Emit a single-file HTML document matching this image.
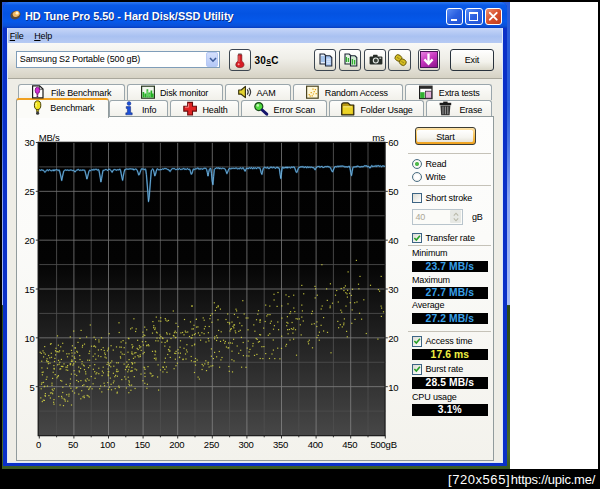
<!DOCTYPE html>
<html><head><meta charset="utf-8"><title>HD Tune Pro 5.50 - Hard Disk/SSD Utility</title>
<style>
html,body{margin:0;padding:0}
body{width:600px;height:489px;background:#000;overflow:hidden;position:relative;font-family:"Liberation Sans",sans-serif;font-size:9px;letter-spacing:-0.15px;color:#000}
.a{position:absolute}
#shot{left:2px;top:2px;width:595.8px;height:466.5px;background:#fff;overflow:hidden}
#wall{left:-0.2px;top:0;width:508.2px;height:466.7px;background:linear-gradient(#2a5cd8 0,#2a5cd8 22%,#4a74e0 30%,#8aa4f0 42%,#a8bcf4 64.8%,#2c4818 65%,#34521c 80%,#4a6a2c 96%,#3a5a24 100%)}
#win{left:1.3px;top:0;width:503.7px;height:464.3px;background:#0a30c8;border-radius:6px 6px 0 0}
#title{left:0;top:0;width:503.7px;height:25.5px;border-radius:6px 6px 0 0;
 background:linear-gradient(#2f7af2 0,#0a5ae8 12%,#0453e2 45%,#0558ea 75%,#0a50d8 92%,#063cc0 100%)}
#ttext{left:21.7px;top:8.1px;color:#fff;font-weight:bold;font-size:10.9px;white-space:nowrap;letter-spacing:0;text-shadow:0.8px 0.8px 0.5px #0a2a80}
#client{left:3.7px;top:25.5px;width:494px;height:434.6px;background:#eeede6;border:1px solid #dce8fa;border-top:none}
#menu{left:0;top:0;width:494px;height:15.2px;background:linear-gradient(#c6d6f8,#a9c1f1 55%,#b6caf3)}
#menu span{position:absolute;top:3.8px}
#tool{left:0;top:15.2px;width:494px;height:35.8px;background:linear-gradient(#f9f9f6,#efeee8 45%,#d6d2c4 100%);border-bottom:1px solid #a9a79c}
.btn{border:1.1px solid #3c4650;border-radius:3px;background:linear-gradient(#fff,#f3f2ec 60%,#d9d6c8);box-sizing:border-box}
.tab{box-sizing:border-box;border:1px solid #9aa6ac;border-bottom:none;border-radius:3px 3px 0 0;background:linear-gradient(#fdfdfb,#f1f0ea);height:15.5px;white-space:nowrap}
.tab span{position:absolute;top:3px}.tab.r2 span{top:3.6px}
#pane{left:9.3px;top:90px;width:478px;height:344.5px;background:#fbfbf8;border:1px solid #919b9c;box-sizing:border-box}
.sep{height:1px;background:#c5c2b8;left:408px;width:83px}
.val{left:412px;width:75.7px;height:11.4px;background:#000;text-align:center;font-weight:bold;font-size:10.3px;line-height:11.8px;letter-spacing:0.12px}
.cb{width:10.4px;height:10.4px;border:1px solid #3c6484;background:linear-gradient(135deg,#dcdcd4,#fff);box-sizing:border-box}
.rb{width:10.4px;height:10.4px;border:1px solid #4a6e84;border-radius:50%;background:radial-gradient(#fff 40%,#dcdcd4);box-sizing:border-box}
svg text{font-family:"Liberation Sans",sans-serif;font-size:9.5px;letter-spacing:-0.25px;fill:#000;stroke:none}
</style></head><body>
<div id="shot" class="a">
 <div id="wall" class="a"></div>
 <div id="win" class="a">
  <div id="title" class="a">
   <svg class="a" style="left:6px;top:7px" width="14" height="13" viewBox="0 0 14 13"><ellipse cx="6.5" cy="6" rx="5.2" ry="4.2" transform="rotate(-25 6.5 6)" fill="#5a4a3a"/><ellipse cx="7.2" cy="5" rx="3.6" ry="2.8" transform="rotate(-25 7 5)" fill="#f2b860"/><circle cx="8" cy="4.2" r="1.4" fill="#fff6d8"/></svg>
   <div id="ttext" class="a">HD Tune Pro 5.50 - Hard Disk/SSD Utility</div>
   <div class="a" style="left:442.9px;top:6.1px;width:17.1px;height:16.5px;border:1px solid #fff;border-radius:3px;box-sizing:border-box;background:linear-gradient(135deg,#5a8df5,#2a5fe0 50%,#2454d4)"><div class="a" style="left:3.5px;top:9.5px;width:6px;height:2.4px;background:#fff"></div></div>
   <div class="a" style="left:462.2px;top:6.1px;width:17.1px;height:16.5px;border:1px solid #fff;border-radius:3px;box-sizing:border-box;background:linear-gradient(135deg,#5a8df5,#2a5fe0 50%,#2454d4)"><div class="a" style="left:3px;top:3px;width:8.5px;height:8.5px;border:1px solid #fff;border-top-width:2.4px;box-sizing:border-box"></div></div>
   <div class="a" style="left:481.4px;top:6.1px;width:17.1px;height:16.5px;border:1px solid #fff;border-radius:3px;box-sizing:border-box;background:linear-gradient(135deg,#ee9070,#d8502c 50%,#c03c1c)"><svg class="a" style="left:0;top:0" width="14.5" height="14.5" viewBox="0 0 14.5 14.5"><path d="M3.8 3.8 L10.7 10.7 M10.7 3.8 L3.8 10.7" stroke="#fff" stroke-width="1.9" stroke-linecap="round"/></svg></div>
  </div>
  <div id="client" class="a">
   <div id="menu" class="a"><span style="left:1.7px"><u>F</u>ile</span><span style="left:26.2px"><u>H</u>elp</span></div>
   <div id="tool" class="a"></div>
  </div>
 </div>
</div>

<!-- everything below positioned in page coordinates -->
<!-- toolbar controls -->
<div class="a" style="left:16px;top:50.6px;width:203.6px;height:17.7px;border:1px solid #7f9db9;background:#fff;box-sizing:border-box"></div>
<div class="a" style="left:19.8px;top:54.3px;white-space:nowrap">Samsung S2 Portable (500 gB)</div>
<div class="a" style="left:205.5px;top:52px;width:12.7px;height:14.8px;border-radius:2px;background:linear-gradient(#d5e0fc,#b4c8f6);border:0.5px solid #b7c9f5;box-sizing:border-box"><svg class="a" style="left:2.3px;top:4.4px" width="8" height="6" viewBox="0 0 8 6"><path d="M1 1 L4 4.2 L7 1" fill="none" stroke="#3c5b9a" stroke-width="1.6"/></svg></div>

<div class="a btn" style="left:228.8px;top:48.8px;width:22.4px;height:22.4px"><svg class="a" style="left:4.6px;top:2.2px" width="12" height="17" viewBox="0 0 12 17"><rect x="4" y="1.2" width="3.8" height="2" rx="0.8" fill="#8c8c8c"/><path d="M4 2.8H7.8V9.2Q10 10.4 10 12.6Q10 15.6 5.9 15.6Q1.8 15.6 1.8 12.6Q1.8 10.4 4 9.2Z" fill="#d81c24" stroke="#7a1418" stroke-width="0.7"/><path d="M5 3.5V10" stroke="#f08080" stroke-width="0.9"/><circle cx="4.6" cy="12.3" r="1" fill="#f4a0a0"/></svg></div>
<div class="a" style="left:254.5px;top:54.8px;font-weight:bold;font-size:10px;letter-spacing:0.25px;white-space:nowrap">30<span style="font-size:8.6px;text-decoration:underline">s</span>C</div>

<div class="a btn" style="left:313.8px;top:48.8px;width:22.4px;height:22.4px"><svg class="a" style="left:4.4px;top:3px" width="14" height="14" viewBox="0 0 14 14"><path d="M1 1H5.2L7 2.8V11H1Z" fill="#e4eefc" stroke="#1c2434" stroke-width="1.1"/><path d="M2 4h4M2 6h4M2 8h4" stroke="#5a90d8" stroke-width="0.9"/><path d="M6.5 2.8H11L12.8 4.6V13H6.5Z" fill="#a8c6f0" stroke="#1c2434" stroke-width="1.1"/><path d="M7.6 6.2h4M7.6 8.2h4M7.6 10.2h4" stroke="#eef4ff" stroke-width="0.9"/></svg></div>
<div class="a btn" style="left:338.7px;top:48.8px;width:22.4px;height:22.4px"><svg class="a" style="left:4.4px;top:3px" width="14" height="14" viewBox="0 0 14 14"><path d="M1 1H5.2L7 2.8V11H1Z" fill="#e4f4e4" stroke="#1c2434" stroke-width="1.1"/><path d="M2.4 4v5M4.4 5v4" stroke="#30b030" stroke-width="1.3"/><path d="M6.5 2.8H11L12.8 4.6V13H6.5Z" fill="#cfe8d0" stroke="#1c2434" stroke-width="1.1"/><path d="M8.4 6v5.6M10.6 7v4.6" stroke="#30b030" stroke-width="1.3"/></svg></div>
<div class="a btn" style="left:363.6px;top:48.8px;width:22.4px;height:22.4px"><svg class="a" style="left:4.2px;top:4.6px" width="14" height="12" viewBox="0 0 14 12"><rect x="0.6" y="2.6" width="12.8" height="8" rx="1" fill="#262c26"/><rect x="4" y="0.8" width="4.6" height="3" rx="0.6" fill="#262c26"/><circle cx="6.8" cy="6.5" r="2.5" fill="#3a423a" stroke="#e8ece8" stroke-width="1.1"/><rect x="10.4" y="3.6" width="1.8" height="1.2" fill="#d8d8d8"/></svg></div>
<div class="a btn" style="left:388.3px;top:48.8px;width:22.4px;height:22.4px"><svg class="a" style="left:3.4px;top:3px" width="15" height="14" viewBox="0 0 15 14"><ellipse cx="5.4" cy="5" rx="3.5" ry="3.1" transform="rotate(35 5.4 5)" fill="#d4bc20" stroke="#6a5c10" stroke-width="0.9"/><ellipse cx="9.8" cy="9.2" rx="3.5" ry="3.1" transform="rotate(35 9.8 9.2)" fill="#d4bc20" stroke="#6a5c10" stroke-width="0.9"/><path d="M4 4.4L6.6 5.8M8.4 8.4L11 10" stroke="#8a7a18" stroke-width="0.8"/></svg></div>
<div class="a btn" style="left:417.6px;top:48.8px;width:22.4px;height:22.4px"></div>
<div class="a" style="left:420px;top:51px;width:17.8px;height:17.2px;border:1px solid #4a1458;box-sizing:border-box;background:linear-gradient(150deg,#e880e0 0,#c838c0 45%,#8c148c 100%)"><svg class="a" style="left:2.4px;top:1.2px" width="11" height="13" viewBox="0 0 11 13"><path d="M5.5 0.6V9.4M1.4 6.4L5.5 10.8L9.6 6.4" fill="none" stroke="#fff" stroke-width="2.3"/></svg></div>
<div class="a btn" style="left:450.3px;top:48.8px;width:43.3px;height:22px;border-color:#28323c"></div>
<div class="a" style="left:450.3px;top:55px;width:43.3px;text-align:center">Exit</div>

<!-- tabs row 1 -->
<div class="a tab" style="left:18px;top:84.3px;width:107px"><span style="left:32px">File Benchmark</span></div>
<div class="a tab" style="left:127px;top:84.3px;width:95.5px"><span style="left:32px">Disk monitor</span></div>
<div class="a tab" style="left:224.5px;top:84.3px;width:66px"><span style="left:31px">AAM</span></div>
<div class="a tab" style="left:292.5px;top:84.3px;width:110px"><span style="left:31.3px">Random Access</span></div>
<div class="a tab" style="left:404.8px;top:84.3px;width:87.7px"><span style="left:33px">Extra tests</span></div>
<!-- tabs row 2 -->
<div class="a tab r2" style="left:109px;top:100.4px;width:59.3px;height:16.4px"><span style="left:32px">Info</span></div>
<div class="a tab r2" style="left:170px;top:100.4px;width:69.4px;height:16.4px"><span style="left:31.5px">Health</span></div>
<div class="a tab r2" style="left:241.3px;top:100.4px;width:86px;height:16.4px"><span style="left:31.3px">Error Scan</span></div>
<div class="a tab r2" style="left:329px;top:100.4px;width:95.4px;height:16.4px"><span style="left:30.5px">Folder Usage</span></div>
<div class="a tab r2" style="left:426.4px;top:100.4px;width:66px;height:16.4px"><span style="left:32px">Erase</span></div>

<!-- pane -->
<div class="a" style="left:16.3px;top:116.3px;width:477.5px;height:344.3px;background:linear-gradient(#fdfdfc 0,#fbfbf9 35%,#f3f2ec 100%);border:1px solid #919b9c;box-sizing:border-box"></div>
<!-- selected tab -->
<div class="a" style="left:16.3px;top:98.2px;width:93px;height:19.6px;background:#fbfbf8;border:1px solid #919b9c;border-bottom:none;border-top:2px solid #f0a020;border-radius:3px 3px 0 0;box-sizing:border-box"></div>
<div class="a" style="left:50.3px;top:102.6px">Benchmark</div>

<!-- tab icons -->
<svg class="a" style="left:0;top:0;pointer-events:none" width="600" height="489" viewBox="0 0 600 489">
 <g transform="translate(32,85.2)"><path d="M0.6 0.6H7.6L11 3.8V12.6H0.6Z" fill="#fff" stroke="#1c1c1c" stroke-width="1.2"/><path d="M7.4 0.8V4H10.8" fill="none" stroke="#1c1c1c" stroke-width="0.8"/><ellipse cx="5.4" cy="5.2" rx="2.3" ry="3.2" fill="#d428d4" stroke="#5a0c5a" stroke-width="0.7"/><rect x="4.5" y="8.4" width="1.8" height="1.6" fill="#8a188a"/><circle cx="5.4" cy="11" r="0.9" fill="#5a0c5a"/></g>
 <g transform="translate(141,85.6)"><rect x="0.6" y="0.6" width="12.8" height="12" fill="#f0f6ec" stroke="#26361e" stroke-width="1.2"/><path d="M2.4 12V6.5M4.4 12V8M6.4 12V3.6M8.4 12V6.8M10.4 12V4.8M11.8 12V8" stroke="#24b024" stroke-width="1.7"/><path d="M6.4 11V5M8.4 11V8" stroke="#7ae07a" stroke-width="0.8"/></g>
 <g transform="translate(238,85.6)"><path d="M0.7 4.4H3.2L7.4 0.8V12L3.2 8.6H0.7Z" fill="#e4d430" stroke="#3a3410" stroke-width="1.2" stroke-linejoin="round"/><path d="M9.2 3.8Q11.2 6.4 9.2 9M11 2.2Q14.2 6.4 11 10.6" fill="none" stroke="#3c3c3c" stroke-width="1.2"/></g>
 <g transform="translate(306,85.6)"><rect x="0.6" y="0.6" width="11.6" height="12" fill="#fff8d8" stroke="#4a4420" stroke-width="1.2"/><path d="M2.6 9h1.2M4.6 7h1.2M6.8 8.4h1.2M8.8 4h1.2M3.6 10.6h1.2M7.6 6h1.2M9.6 8h1.2M5.6 10.2h1.2M6.4 3.6h1.2" stroke="#e0a010" stroke-width="1.2"/></g>
 <g transform="translate(419,85.6)"><rect x="0.6" y="0.6" width="12.4" height="12.4" fill="#fff" stroke="#1c1c1c" stroke-width="1.2"/><rect x="0.6" y="0.6" width="12.4" height="2.6" fill="#2a2a2a"/><rect x="1.2" y="6.6" width="4.4" height="6" fill="#30b030"/><rect x="6.4" y="5.6" width="6" height="7" fill="#e0b0d4" stroke="#3a2a3a" stroke-width="0.8"/></g>
 <g transform="translate(33.2,100.6)"><ellipse cx="4.4" cy="4.6" rx="3.2" ry="4.4" fill="#f0e21c" stroke="#4a4208" stroke-width="1"/><path d="M3.2 2.4Q2.4 4 3 6" fill="none" stroke="#fffcc0" stroke-width="0.9"/><rect x="3.2" y="9" width="2.4" height="2" fill="#b8a814" stroke="#4a4208" stroke-width="0.6"/><circle cx="4.4" cy="12.6" r="1.6" fill="#3a3a3a"/></g>
 <g transform="translate(125,101.6)"><circle cx="4" cy="1.9" r="1.9" fill="#1c50d8" stroke="#0a2070" stroke-width="0.4"/><path d="M1.2 5H5.6V11.2H7.2V13.2H0.8V11.2H2.4V6.8H1.2Z" fill="#1c50d8" stroke="#0a2070" stroke-width="0.5"/></g>
 <g transform="translate(183.2,101.8)"><path d="M4.5 0.6H9.3V4.5H13.2V9.3H9.3V13.2H4.5V9.3H0.6V4.5H4.5Z" fill="#e02424" stroke="#6a0c0c" stroke-width="1.1"/><path d="M5.4 1.8V5.4H1.8" fill="none" stroke="#f89090" stroke-width="0.9"/></g>
 <g transform="translate(254,101.8)"><circle cx="4.8" cy="4.8" r="4" fill="#50dc40" stroke="#1c4a1c" stroke-width="1.2"/><circle cx="3.8" cy="3.6" r="1.3" fill="#c0f8b0"/><path d="M8.2 8.2L12.8 12.4" stroke="#14146a" stroke-width="3" stroke-linecap="round"/></g>
 <g transform="translate(341,102.2)"><path d="M0.7 2.6Q0.7 0.7 2.8 0.7H7L9.2 2.8H12.8V12.6H0.7Z" fill="#b89810" stroke="#2a2408" stroke-width="1.2" stroke-linejoin="round"/><path d="M1.8 4.2H11.8V11.6H1.8Z" fill="#ecd428"/><path d="M2.2 4.6H11" stroke="#fff4a0" stroke-width="0.8"/></g>
 <g transform="translate(439.6,101.6)"><rect x="0" y="1.2" width="11.6" height="2.4" fill="#1c1c1c"/><rect x="3.6" y="0" width="4.4" height="1.8" fill="#1c1c1c"/><path d="M0.8 4H10.8L10 13.6H1.6Z" fill="#343434"/><path d="M3.4 5V12.6M5.8 5V12.6M8.2 5V12.6" stroke="#b4b4b4" stroke-width="0.8"/></g>
</svg>

<!-- chart -->
<svg class="a" style="left:0;top:0" width="600" height="489" viewBox="0 0 600 489">
 <defs><linearGradient id="cg" x1="0" y1="0" x2="0" y2="1"><stop offset="0" stop-color="#000"/><stop offset="0.4" stop-color="#030303"/><stop offset="1" stop-color="#474747"/></linearGradient><linearGradient id="mg" gradientUnits="userSpaceOnUse" x1="0" y1="142" x2="0" y2="436"><stop offset="0" stop-color="#707070"/><stop offset="1" stop-color="#505050"/></linearGradient></defs>
 <rect x="37.8" y="141.9" width="347.6" height="294.2" fill="url(#cg)"/>
 <g stroke-width="0.85" opacity="0.8"><g stroke="url(#mg)"><line x1="56.60" y1="142.5" x2="56.60" y2="435.5"/><line x1="91.20" y1="142.5" x2="91.20" y2="435.5"/><line x1="125.80" y1="142.5" x2="125.80" y2="435.5"/><line x1="160.40" y1="142.5" x2="160.40" y2="435.5"/><line x1="195.00" y1="142.5" x2="195.00" y2="435.5"/><line x1="229.60" y1="142.5" x2="229.60" y2="435.5"/><line x1="264.20" y1="142.5" x2="264.20" y2="435.5"/><line x1="298.80" y1="142.5" x2="298.80" y2="435.5"/><line x1="333.40" y1="142.5" x2="333.40" y2="435.5"/><line x1="368.00" y1="142.5" x2="368.00" y2="435.5"/></g><g><line x1="39.3" y1="166.92" x2="385.3" y2="166.92" stroke="#6d6d6d"/><line x1="39.3" y1="215.75" x2="385.3" y2="215.75" stroke="#686868"/><line x1="39.3" y1="264.58" x2="385.3" y2="264.58" stroke="#626262"/><line x1="39.3" y1="313.42" x2="385.3" y2="313.42" stroke="#5d5d5d"/><line x1="39.3" y1="362.25" x2="385.3" y2="362.25" stroke="#585858"/><line x1="39.3" y1="411.08" x2="385.3" y2="411.08" stroke="#525252"/></g><g stroke="#909090"><line x1="73.90" y1="142.5" x2="73.90" y2="435.5"/><line x1="108.50" y1="142.5" x2="108.50" y2="435.5"/><line x1="143.10" y1="142.5" x2="143.10" y2="435.5"/><line x1="177.70" y1="142.5" x2="177.70" y2="435.5"/><line x1="212.30" y1="142.5" x2="212.30" y2="435.5"/><line x1="246.90" y1="142.5" x2="246.90" y2="435.5"/><line x1="281.50" y1="142.5" x2="281.50" y2="435.5"/><line x1="316.10" y1="142.5" x2="316.10" y2="435.5"/><line x1="350.70" y1="142.5" x2="350.70" y2="435.5"/><line x1="39.3" y1="191.33" x2="385.3" y2="191.33"/><line x1="39.3" y1="240.17" x2="385.3" y2="240.17"/><line x1="39.3" y1="289.00" x2="385.3" y2="289.00"/><line x1="39.3" y1="337.83" x2="385.3" y2="337.83"/><line x1="39.3" y1="386.67" x2="385.3" y2="386.67"/></g></g>
 <rect x="38.2" y="142.3" width="346.8" height="293.4" fill="none" stroke="#161616" stroke-width="1"/>
 <g fill="#dcdc44" opacity="0.85"><rect x="66.1" y="394.1" width="1.2" height="1.2"/><rect x="132.3" y="345.8" width="1.2" height="1.2"/><rect x="218.0" y="329.8" width="1.2" height="1.2"/><rect x="363.2" y="299.2" width="1.2" height="1.2"/><rect x="194.8" y="361.1" width="1.2" height="1.2"/><rect x="85.2" y="373.3" width="1.2" height="1.2"/><rect x="207.5" y="363.5" width="1.2" height="1.2"/><rect x="158.3" y="320.4" width="1.2" height="1.2"/><rect x="139.6" y="354.3" width="1.2" height="1.2"/><rect x="134.5" y="387.9" width="1.2" height="1.2"/><rect x="131.2" y="362.0" width="1.2" height="1.2"/><rect x="288.3" y="296.0" width="1.2" height="1.2"/><rect x="262.3" y="358.0" width="1.2" height="1.2"/><rect x="142.3" y="336.1" width="1.2" height="1.2"/><rect x="143.4" y="366.6" width="1.2" height="1.2"/><rect x="211.3" y="321.7" width="1.2" height="1.2"/><rect x="87.6" y="395.4" width="1.2" height="1.2"/><rect x="182.5" y="358.5" width="1.2" height="1.2"/><rect x="82.9" y="364.6" width="1.2" height="1.2"/><rect x="177.6" y="326.0" width="1.2" height="1.2"/><rect x="46.8" y="367.6" width="1.2" height="1.2"/><rect x="125.3" y="378.5" width="1.2" height="1.2"/><rect x="197.5" y="376.5" width="1.2" height="1.2"/><rect x="144.4" y="368.8" width="1.2" height="1.2"/><rect x="78.1" y="366.5" width="1.2" height="1.2"/><rect x="42.9" y="381.8" width="1.2" height="1.2"/><rect x="120.5" y="341.4" width="1.2" height="1.2"/><rect x="272.7" y="339.4" width="1.2" height="1.2"/><rect x="117.8" y="362.2" width="1.2" height="1.2"/><rect x="119.2" y="346.5" width="1.2" height="1.2"/><rect x="210.8" y="348.3" width="1.2" height="1.2"/><rect x="175.4" y="322.7" width="1.2" height="1.2"/><rect x="60.1" y="346.2" width="1.2" height="1.2"/><rect x="153.2" y="325.1" width="1.2" height="1.2"/><rect x="269.2" y="333.2" width="1.2" height="1.2"/><rect x="369.9" y="284.7" width="1.2" height="1.2"/><rect x="188.9" y="335.9" width="1.2" height="1.2"/><rect x="349.7" y="302.1" width="1.2" height="1.2"/><rect x="53.4" y="399.0" width="1.2" height="1.2"/><rect x="156.6" y="332.3" width="1.2" height="1.2"/><rect x="287.3" y="322.6" width="1.2" height="1.2"/><rect x="365.7" y="332.9" width="1.2" height="1.2"/><rect x="126.2" y="361.4" width="1.2" height="1.2"/><rect x="249.4" y="348.8" width="1.2" height="1.2"/><rect x="66.6" y="366.6" width="1.2" height="1.2"/><rect x="131.0" y="384.5" width="1.2" height="1.2"/><rect x="193.9" y="344.2" width="1.2" height="1.2"/><rect x="269.2" y="305.5" width="1.2" height="1.2"/><rect x="108.2" y="371.2" width="1.2" height="1.2"/><rect x="214.8" y="309.9" width="1.2" height="1.2"/><rect x="74.7" y="347.4" width="1.2" height="1.2"/><rect x="80.5" y="329.8" width="1.2" height="1.2"/><rect x="194.7" y="333.1" width="1.2" height="1.2"/><rect x="114.6" y="388.0" width="1.2" height="1.2"/><rect x="109.7" y="377.5" width="1.2" height="1.2"/><rect x="61.2" y="380.5" width="1.2" height="1.2"/><rect x="70.8" y="360.8" width="1.2" height="1.2"/><rect x="147.4" y="366.0" width="1.2" height="1.2"/><rect x="107.5" y="361.8" width="1.2" height="1.2"/><rect x="198.8" y="378.5" width="1.2" height="1.2"/><rect x="354.1" y="302.1" width="1.2" height="1.2"/><rect x="76.9" y="351.6" width="1.2" height="1.2"/><rect x="57.8" y="375.0" width="1.2" height="1.2"/><rect x="311.2" y="323.6" width="1.2" height="1.2"/><rect x="102.6" y="366.6" width="1.2" height="1.2"/><rect x="53.5" y="367.8" width="1.2" height="1.2"/><rect x="80.0" y="367.8" width="1.2" height="1.2"/><rect x="193.9" y="371.9" width="1.2" height="1.2"/><rect x="120.7" y="346.6" width="1.2" height="1.2"/><rect x="83.7" y="397.0" width="1.2" height="1.2"/><rect x="53.4" y="403.6" width="1.2" height="1.2"/><rect x="213.7" y="302.2" width="1.2" height="1.2"/><rect x="321.3" y="264.1" width="1.2" height="1.2"/><rect x="62.0" y="365.9" width="1.2" height="1.2"/><rect x="89.0" y="350.6" width="1.2" height="1.2"/><rect x="52.0" y="393.1" width="1.2" height="1.2"/><rect x="349.1" y="292.7" width="1.2" height="1.2"/><rect x="257.2" y="313.6" width="1.2" height="1.2"/><rect x="239.1" y="322.5" width="1.2" height="1.2"/><rect x="323.0" y="317.0" width="1.2" height="1.2"/><rect x="268.9" y="357.9" width="1.2" height="1.2"/><rect x="85.0" y="371.2" width="1.2" height="1.2"/><rect x="76.1" y="379.8" width="1.2" height="1.2"/><rect x="203.6" y="319.6" width="1.2" height="1.2"/><rect x="72.4" y="364.5" width="1.2" height="1.2"/><rect x="233.9" y="324.3" width="1.2" height="1.2"/><rect x="293.1" y="294.6" width="1.2" height="1.2"/><rect x="59.5" y="404.4" width="1.2" height="1.2"/><rect x="88.5" y="352.9" width="1.2" height="1.2"/><rect x="146.3" y="387.7" width="1.2" height="1.2"/><rect x="286.8" y="316.1" width="1.2" height="1.2"/><rect x="117.5" y="370.7" width="1.2" height="1.2"/><rect x="131.3" y="366.9" width="1.2" height="1.2"/><rect x="343.8" y="318.3" width="1.2" height="1.2"/><rect x="153.0" y="327.1" width="1.2" height="1.2"/><rect x="236.6" y="345.4" width="1.2" height="1.2"/><rect x="354.4" y="318.8" width="1.2" height="1.2"/><rect x="49.2" y="357.2" width="1.2" height="1.2"/><rect x="294.2" y="311.0" width="1.2" height="1.2"/><rect x="62.1" y="342.7" width="1.2" height="1.2"/><rect x="110.5" y="383.7" width="1.2" height="1.2"/><rect x="257.8" y="341.5" width="1.2" height="1.2"/><rect x="110.2" y="366.2" width="1.2" height="1.2"/><rect x="166.6" y="333.4" width="1.2" height="1.2"/><rect x="253.2" y="324.3" width="1.2" height="1.2"/><rect x="225.4" y="318.9" width="1.2" height="1.2"/><rect x="98.2" y="373.1" width="1.2" height="1.2"/><rect x="315.0" y="288.2" width="1.2" height="1.2"/><rect x="137.5" y="348.9" width="1.2" height="1.2"/><rect x="162.3" y="366.4" width="1.2" height="1.2"/><rect x="346.7" y="336.2" width="1.2" height="1.2"/><rect x="345.2" y="292.1" width="1.2" height="1.2"/><rect x="159.9" y="369.4" width="1.2" height="1.2"/><rect x="239.7" y="329.7" width="1.2" height="1.2"/><rect x="105.6" y="357.4" width="1.2" height="1.2"/><rect x="152.3" y="375.0" width="1.2" height="1.2"/><rect x="74.5" y="347.2" width="1.2" height="1.2"/><rect x="260.0" y="334.3" width="1.2" height="1.2"/><rect x="88.4" y="379.6" width="1.2" height="1.2"/><rect x="118.4" y="322.2" width="1.2" height="1.2"/><rect x="261.3" y="346.1" width="1.2" height="1.2"/><rect x="125.8" y="366.6" width="1.2" height="1.2"/><rect x="102.6" y="347.1" width="1.2" height="1.2"/><rect x="227.3" y="321.8" width="1.2" height="1.2"/><rect x="74.3" y="373.7" width="1.2" height="1.2"/><rect x="219.8" y="308.5" width="1.2" height="1.2"/><rect x="162.3" y="371.3" width="1.2" height="1.2"/><rect x="280.9" y="347.8" width="1.2" height="1.2"/><rect x="115.0" y="374.8" width="1.2" height="1.2"/><rect x="233.8" y="313.8" width="1.2" height="1.2"/><rect x="201.3" y="332.1" width="1.2" height="1.2"/><rect x="131.8" y="363.5" width="1.2" height="1.2"/><rect x="40.2" y="397.3" width="1.2" height="1.2"/><rect x="334.9" y="294.6" width="1.2" height="1.2"/><rect x="87.9" y="367.0" width="1.2" height="1.2"/><rect x="125.8" y="387.4" width="1.2" height="1.2"/><rect x="159.2" y="337.5" width="1.2" height="1.2"/><rect x="329.5" y="307.1" width="1.2" height="1.2"/><rect x="231.4" y="350.6" width="1.2" height="1.2"/><rect x="89.3" y="365.1" width="1.2" height="1.2"/><rect x="41.6" y="371.8" width="1.2" height="1.2"/><rect x="65.4" y="366.6" width="1.2" height="1.2"/><rect x="216.0" y="306.9" width="1.2" height="1.2"/><rect x="203.5" y="333.1" width="1.2" height="1.2"/><rect x="185.4" y="331.7" width="1.2" height="1.2"/><rect x="133.3" y="318.2" width="1.2" height="1.2"/><rect x="153.8" y="357.8" width="1.2" height="1.2"/><rect x="228.0" y="342.4" width="1.2" height="1.2"/><rect x="112.8" y="372.7" width="1.2" height="1.2"/><rect x="266.2" y="315.4" width="1.2" height="1.2"/><rect x="128.6" y="366.4" width="1.2" height="1.2"/><rect x="58.2" y="395.9" width="1.2" height="1.2"/><rect x="193.8" y="334.0" width="1.2" height="1.2"/><rect x="182.0" y="331.9" width="1.2" height="1.2"/><rect x="44.7" y="353.6" width="1.2" height="1.2"/><rect x="83.9" y="343.5" width="1.2" height="1.2"/><rect x="104.1" y="352.4" width="1.2" height="1.2"/><rect x="287.5" y="333.2" width="1.2" height="1.2"/><rect x="66.9" y="356.2" width="1.2" height="1.2"/><rect x="166.5" y="340.9" width="1.2" height="1.2"/><rect x="183.9" y="318.9" width="1.2" height="1.2"/><rect x="154.2" y="328.9" width="1.2" height="1.2"/><rect x="146.1" y="329.2" width="1.2" height="1.2"/><rect x="318.7" y="339.6" width="1.2" height="1.2"/><rect x="346.4" y="293.2" width="1.2" height="1.2"/><rect x="159.3" y="334.4" width="1.2" height="1.2"/><rect x="120.3" y="351.5" width="1.2" height="1.2"/><rect x="69.6" y="363.3" width="1.2" height="1.2"/><rect x="219.9" y="340.8" width="1.2" height="1.2"/><rect x="164.8" y="357.6" width="1.2" height="1.2"/><rect x="168.7" y="350.5" width="1.2" height="1.2"/><rect x="219.0" y="366.6" width="1.2" height="1.2"/><rect x="207.6" y="361.8" width="1.2" height="1.2"/><rect x="127.2" y="371.2" width="1.2" height="1.2"/><rect x="56.9" y="335.3" width="1.2" height="1.2"/><rect x="246.2" y="355.3" width="1.2" height="1.2"/><rect x="175.3" y="336.8" width="1.2" height="1.2"/><rect x="127.8" y="337.7" width="1.2" height="1.2"/><rect x="55.6" y="351.1" width="1.2" height="1.2"/><rect x="273.5" y="299.4" width="1.2" height="1.2"/><rect x="151.4" y="375.6" width="1.2" height="1.2"/><rect x="273.8" y="325.1" width="1.2" height="1.2"/><rect x="346.8" y="296.5" width="1.2" height="1.2"/><rect x="195.8" y="318.7" width="1.2" height="1.2"/><rect x="88.7" y="396.4" width="1.2" height="1.2"/><rect x="131.5" y="370.2" width="1.2" height="1.2"/><rect x="155.0" y="351.2" width="1.2" height="1.2"/><rect x="59.0" y="350.2" width="1.2" height="1.2"/><rect x="138.3" y="356.3" width="1.2" height="1.2"/><rect x="73.1" y="330.5" width="1.2" height="1.2"/><rect x="44.8" y="393.0" width="1.2" height="1.2"/><rect x="103.6" y="349.9" width="1.2" height="1.2"/><rect x="87.1" y="359.6" width="1.2" height="1.2"/><rect x="134.1" y="352.4" width="1.2" height="1.2"/><rect x="241.0" y="366.6" width="1.2" height="1.2"/><rect x="209.9" y="314.9" width="1.2" height="1.2"/><rect x="131.4" y="344.1" width="1.2" height="1.2"/><rect x="40.9" y="383.6" width="1.2" height="1.2"/><rect x="285.4" y="294.3" width="1.2" height="1.2"/><rect x="216.9" y="337.1" width="1.2" height="1.2"/><rect x="116.7" y="391.6" width="1.2" height="1.2"/><rect x="281.1" y="335.6" width="1.2" height="1.2"/><rect x="74.9" y="361.1" width="1.2" height="1.2"/><rect x="136.0" y="369.4" width="1.2" height="1.2"/><rect x="337.2" y="320.8" width="1.2" height="1.2"/><rect x="173.8" y="332.1" width="1.2" height="1.2"/><rect x="156.4" y="337.5" width="1.2" height="1.2"/><rect x="57.8" y="344.6" width="1.2" height="1.2"/><rect x="185.4" y="358.4" width="1.2" height="1.2"/><rect x="46.5" y="358.2" width="1.2" height="1.2"/><rect x="51.2" y="392.2" width="1.2" height="1.2"/><rect x="254.3" y="330.6" width="1.2" height="1.2"/><rect x="138.8" y="345.2" width="1.2" height="1.2"/><rect x="132.2" y="353.5" width="1.2" height="1.2"/><rect x="84.8" y="379.6" width="1.2" height="1.2"/><rect x="108.9" y="364.9" width="1.2" height="1.2"/><rect x="201.6" y="363.8" width="1.2" height="1.2"/><rect x="43.4" y="352.2" width="1.2" height="1.2"/><rect x="209.3" y="318.1" width="1.2" height="1.2"/><rect x="60.8" y="365.8" width="1.2" height="1.2"/><rect x="294.9" y="329.1" width="1.2" height="1.2"/><rect x="355.8" y="259.8" width="1.2" height="1.2"/><rect x="237.2" y="316.7" width="1.2" height="1.2"/><rect x="140.6" y="349.8" width="1.2" height="1.2"/><rect x="212.1" y="365.1" width="1.2" height="1.2"/><rect x="69.7" y="383.1" width="1.2" height="1.2"/><rect x="43.0" y="356.3" width="1.2" height="1.2"/><rect x="174.1" y="352.7" width="1.2" height="1.2"/><rect x="73.5" y="370.1" width="1.2" height="1.2"/><rect x="207.7" y="338.0" width="1.2" height="1.2"/><rect x="98.4" y="341.3" width="1.2" height="1.2"/><rect x="184.9" y="353.4" width="1.2" height="1.2"/><rect x="104.4" y="356.5" width="1.2" height="1.2"/><rect x="53.9" y="360.9" width="1.2" height="1.2"/><rect x="40.7" y="352.8" width="1.2" height="1.2"/><rect x="230.7" y="328.1" width="1.2" height="1.2"/><rect x="238.1" y="352.7" width="1.2" height="1.2"/><rect x="98.3" y="339.4" width="1.2" height="1.2"/><rect x="60.8" y="358.8" width="1.2" height="1.2"/><rect x="131.5" y="327.3" width="1.2" height="1.2"/><rect x="194.9" y="364.5" width="1.2" height="1.2"/><rect x="253.9" y="354.8" width="1.2" height="1.2"/><rect x="321.6" y="305.4" width="1.2" height="1.2"/><rect x="115.9" y="346.3" width="1.2" height="1.2"/><rect x="123.5" y="363.5" width="1.2" height="1.2"/><rect x="79.1" y="355.0" width="1.2" height="1.2"/><rect x="82.0" y="385.0" width="1.2" height="1.2"/><rect x="51.4" y="384.6" width="1.2" height="1.2"/><rect x="71.4" y="352.4" width="1.2" height="1.2"/><rect x="94.4" y="353.3" width="1.2" height="1.2"/><rect x="214.0" y="338.2" width="1.2" height="1.2"/><rect x="242.6" y="341.9" width="1.2" height="1.2"/><rect x="341.1" y="311.6" width="1.2" height="1.2"/><rect x="146.8" y="383.7" width="1.2" height="1.2"/><rect x="150.4" y="373.2" width="1.2" height="1.2"/><rect x="62.1" y="391.9" width="1.2" height="1.2"/><rect x="137.0" y="339.7" width="1.2" height="1.2"/><rect x="135.0" y="330.9" width="1.2" height="1.2"/><rect x="281.2" y="305.3" width="1.2" height="1.2"/><rect x="285.9" y="343.8" width="1.2" height="1.2"/><rect x="144.2" y="382.7" width="1.2" height="1.2"/><rect x="127.4" y="351.6" width="1.2" height="1.2"/><rect x="308.0" y="343.2" width="1.2" height="1.2"/><rect x="77.8" y="381.0" width="1.2" height="1.2"/><rect x="69.1" y="385.3" width="1.2" height="1.2"/><rect x="256.6" y="338.8" width="1.2" height="1.2"/><rect x="83.5" y="395.4" width="1.2" height="1.2"/><rect x="227.5" y="347.3" width="1.2" height="1.2"/><rect x="109.0" y="386.5" width="1.2" height="1.2"/><rect x="217.6" y="306.1" width="1.2" height="1.2"/><rect x="345.4" y="305.5" width="1.2" height="1.2"/><rect x="97.8" y="349.4" width="1.2" height="1.2"/><rect x="326.9" y="331.8" width="1.2" height="1.2"/><rect x="107.5" y="368.4" width="1.2" height="1.2"/><rect x="201.5" y="368.9" width="1.2" height="1.2"/><rect x="68.4" y="353.2" width="1.2" height="1.2"/><rect x="208.5" y="366.4" width="1.2" height="1.2"/><rect x="265.1" y="353.0" width="1.2" height="1.2"/><rect x="141.8" y="341.1" width="1.2" height="1.2"/><rect x="152.3" y="321.0" width="1.2" height="1.2"/><rect x="230.0" y="328.7" width="1.2" height="1.2"/><rect x="210.4" y="365.5" width="1.2" height="1.2"/><rect x="67.1" y="369.7" width="1.2" height="1.2"/><rect x="191.4" y="305.7" width="1.2" height="1.2"/><rect x="137.3" y="355.0" width="1.2" height="1.2"/><rect x="96.2" y="372.2" width="1.2" height="1.2"/><rect x="106.9" y="350.2" width="1.2" height="1.2"/><rect x="60.1" y="368.2" width="1.2" height="1.2"/><rect x="263.3" y="346.0" width="1.2" height="1.2"/><rect x="194.1" y="343.5" width="1.2" height="1.2"/><rect x="183.4" y="347.7" width="1.2" height="1.2"/><rect x="228.9" y="323.3" width="1.2" height="1.2"/><rect x="222.9" y="339.6" width="1.2" height="1.2"/><rect x="67.1" y="400.6" width="1.2" height="1.2"/><rect x="301.2" y="304.5" width="1.2" height="1.2"/><rect x="86.6" y="394.8" width="1.2" height="1.2"/><rect x="44.5" y="394.9" width="1.2" height="1.2"/><rect x="340.6" y="287.9" width="1.2" height="1.2"/><rect x="81.8" y="346.5" width="1.2" height="1.2"/><rect x="73.8" y="356.4" width="1.2" height="1.2"/><rect x="272.9" y="328.6" width="1.2" height="1.2"/><rect x="46.6" y="361.1" width="1.2" height="1.2"/><rect x="139.7" y="355.9" width="1.2" height="1.2"/><rect x="44.1" y="385.7" width="1.2" height="1.2"/><rect x="316.3" y="337.0" width="1.2" height="1.2"/><rect x="94.1" y="364.0" width="1.2" height="1.2"/><rect x="65.6" y="383.8" width="1.2" height="1.2"/><rect x="164.2" y="345.5" width="1.2" height="1.2"/><rect x="41.4" y="382.1" width="1.2" height="1.2"/><rect x="89.8" y="386.2" width="1.2" height="1.2"/><rect x="130.0" y="328.3" width="1.2" height="1.2"/><rect x="258.9" y="340.9" width="1.2" height="1.2"/><rect x="259.1" y="334.0" width="1.2" height="1.2"/><rect x="166.4" y="371.7" width="1.2" height="1.2"/><rect x="41.8" y="374.2" width="1.2" height="1.2"/><rect x="62.2" y="386.6" width="1.2" height="1.2"/><rect x="67.0" y="365.0" width="1.2" height="1.2"/><rect x="339.7" y="324.1" width="1.2" height="1.2"/><rect x="128.4" y="383.7" width="1.2" height="1.2"/><rect x="108.6" y="333.1" width="1.2" height="1.2"/><rect x="247.3" y="317.4" width="1.2" height="1.2"/><rect x="112.7" y="349.5" width="1.2" height="1.2"/><rect x="274.2" y="358.0" width="1.2" height="1.2"/><rect x="128.2" y="392.1" width="1.2" height="1.2"/><rect x="381.0" y="307.5" width="1.2" height="1.2"/><rect x="88.7" y="387.5" width="1.2" height="1.2"/><rect x="247.4" y="329.2" width="1.2" height="1.2"/><rect x="135.6" y="328.3" width="1.2" height="1.2"/><rect x="118.2" y="385.5" width="1.2" height="1.2"/><rect x="231.4" y="321.5" width="1.2" height="1.2"/><rect x="100.7" y="349.0" width="1.2" height="1.2"/><rect x="259.4" y="321.6" width="1.2" height="1.2"/><rect x="351.9" y="288.7" width="1.2" height="1.2"/><rect x="60.1" y="379.9" width="1.2" height="1.2"/><rect x="256.3" y="353.8" width="1.2" height="1.2"/><rect x="114.2" y="376.1" width="1.2" height="1.2"/><rect x="131.8" y="347.2" width="1.2" height="1.2"/><rect x="95.2" y="358.6" width="1.2" height="1.2"/><rect x="344.8" y="285.3" width="1.2" height="1.2"/><rect x="142.3" y="380.1" width="1.2" height="1.2"/><rect x="91.5" y="388.2" width="1.2" height="1.2"/><rect x="50.7" y="352.7" width="1.2" height="1.2"/><rect x="214.0" y="351.8" width="1.2" height="1.2"/><rect x="343.3" y="322.5" width="1.2" height="1.2"/><rect x="101.2" y="391.3" width="1.2" height="1.2"/><rect x="160.2" y="320.6" width="1.2" height="1.2"/><rect x="133.7" y="376.0" width="1.2" height="1.2"/><rect x="231.9" y="371.3" width="1.2" height="1.2"/><rect x="177.5" y="349.2" width="1.2" height="1.2"/><rect x="41.1" y="360.6" width="1.2" height="1.2"/><rect x="169.7" y="356.8" width="1.2" height="1.2"/><rect x="56.4" y="377.2" width="1.2" height="1.2"/><rect x="39.6" y="351.7" width="1.2" height="1.2"/><rect x="175.5" y="350.8" width="1.2" height="1.2"/><rect x="116.5" y="371.1" width="1.2" height="1.2"/><rect x="204.2" y="363.3" width="1.2" height="1.2"/><rect x="220.6" y="331.2" width="1.2" height="1.2"/><rect x="54.3" y="357.8" width="1.2" height="1.2"/><rect x="92.5" y="383.2" width="1.2" height="1.2"/><rect x="69.7" y="336.3" width="1.2" height="1.2"/><rect x="301.8" y="310.3" width="1.2" height="1.2"/><rect x="157.0" y="376.4" width="1.2" height="1.2"/><rect x="59.3" y="368.5" width="1.2" height="1.2"/><rect x="70.9" y="349.8" width="1.2" height="1.2"/><rect x="167.9" y="348.9" width="1.2" height="1.2"/><rect x="161.2" y="341.6" width="1.2" height="1.2"/><rect x="168.1" y="349.0" width="1.2" height="1.2"/><rect x="301.2" y="316.5" width="1.2" height="1.2"/><rect x="191.5" y="345.1" width="1.2" height="1.2"/><rect x="53.3" y="365.0" width="1.2" height="1.2"/><rect x="80.2" y="398.2" width="1.2" height="1.2"/><rect x="234.6" y="330.3" width="1.2" height="1.2"/><rect x="58.3" y="351.3" width="1.2" height="1.2"/><rect x="89.7" y="324.4" width="1.2" height="1.2"/><rect x="130.1" y="370.6" width="1.2" height="1.2"/><rect x="57.0" y="351.1" width="1.2" height="1.2"/><rect x="128.3" y="380.2" width="1.2" height="1.2"/><rect x="241.3" y="325.1" width="1.2" height="1.2"/><rect x="231.7" y="342.6" width="1.2" height="1.2"/><rect x="140.2" y="346.2" width="1.2" height="1.2"/><rect x="343.1" y="324.2" width="1.2" height="1.2"/><rect x="245.6" y="317.4" width="1.2" height="1.2"/><rect x="272.8" y="349.5" width="1.2" height="1.2"/><rect x="74.2" y="357.8" width="1.2" height="1.2"/><rect x="267.3" y="314.0" width="1.2" height="1.2"/><rect x="53.7" y="388.1" width="1.2" height="1.2"/><rect x="149.6" y="372.5" width="1.2" height="1.2"/><rect x="174.8" y="358.6" width="1.2" height="1.2"/><rect x="228.1" y="347.2" width="1.2" height="1.2"/><rect x="326.0" y="288.3" width="1.2" height="1.2"/><rect x="221.4" y="356.9" width="1.2" height="1.2"/><rect x="69.9" y="378.4" width="1.2" height="1.2"/><rect x="50.5" y="343.0" width="1.2" height="1.2"/><rect x="154.6" y="350.4" width="1.2" height="1.2"/><rect x="311.9" y="347.2" width="1.2" height="1.2"/><rect x="245.4" y="366.7" width="1.2" height="1.2"/><rect x="263.1" y="327.5" width="1.2" height="1.2"/><rect x="90.9" y="345.6" width="1.2" height="1.2"/><rect x="224.8" y="340.9" width="1.2" height="1.2"/><rect x="107.7" y="375.1" width="1.2" height="1.2"/><rect x="347.5" y="271.3" width="1.2" height="1.2"/><rect x="118.6" y="386.9" width="1.2" height="1.2"/><rect x="175.4" y="365.1" width="1.2" height="1.2"/><rect x="285.2" y="345.5" width="1.2" height="1.2"/><rect x="53.6" y="368.5" width="1.2" height="1.2"/><rect x="357.9" y="283.6" width="1.2" height="1.2"/><rect x="69.8" y="364.1" width="1.2" height="1.2"/><rect x="107.9" y="374.8" width="1.2" height="1.2"/><rect x="259.5" y="319.8" width="1.2" height="1.2"/><rect x="160.1" y="317.2" width="1.2" height="1.2"/><rect x="86.0" y="336.4" width="1.2" height="1.2"/><rect x="243.6" y="313.4" width="1.2" height="1.2"/><rect x="311.8" y="310.7" width="1.2" height="1.2"/><rect x="179.9" y="340.2" width="1.2" height="1.2"/><rect x="313.7" y="323.1" width="1.2" height="1.2"/><rect x="248.5" y="351.3" width="1.2" height="1.2"/><rect x="140.4" y="373.5" width="1.2" height="1.2"/><rect x="81.1" y="390.1" width="1.2" height="1.2"/><rect x="164.7" y="318.0" width="1.2" height="1.2"/><rect x="326.7" y="299.8" width="1.2" height="1.2"/><rect x="126.1" y="366.4" width="1.2" height="1.2"/><rect x="269.8" y="322.7" width="1.2" height="1.2"/><rect x="164.5" y="341.9" width="1.2" height="1.2"/><rect x="211.6" y="313.2" width="1.2" height="1.2"/><rect x="298.7" y="318.3" width="1.2" height="1.2"/><rect x="55.4" y="347.7" width="1.2" height="1.2"/><rect x="303.1" y="293.2" width="1.2" height="1.2"/><rect x="273.4" y="293.7" width="1.2" height="1.2"/><rect x="135.3" y="352.0" width="1.2" height="1.2"/><rect x="95.4" y="373.3" width="1.2" height="1.2"/><rect x="142.3" y="331.6" width="1.2" height="1.2"/><rect x="107.6" y="373.5" width="1.2" height="1.2"/><rect x="175.6" y="332.0" width="1.2" height="1.2"/><rect x="308.7" y="339.6" width="1.2" height="1.2"/><rect x="299.7" y="324.2" width="1.2" height="1.2"/><rect x="129.2" y="384.8" width="1.2" height="1.2"/><rect x="131.2" y="370.4" width="1.2" height="1.2"/><rect x="318.8" y="331.6" width="1.2" height="1.2"/><rect x="157.5" y="340.3" width="1.2" height="1.2"/><rect x="351.2" y="322.7" width="1.2" height="1.2"/><rect x="179.0" y="356.6" width="1.2" height="1.2"/><rect x="343.3" y="290.0" width="1.2" height="1.2"/><rect x="134.5" y="356.3" width="1.2" height="1.2"/><rect x="71.8" y="345.2" width="1.2" height="1.2"/><rect x="281.3" y="317.5" width="1.2" height="1.2"/><rect x="134.5" y="368.5" width="1.2" height="1.2"/><rect x="53.0" y="401.7" width="1.2" height="1.2"/><rect x="236.0" y="310.3" width="1.2" height="1.2"/><rect x="49.8" y="397.4" width="1.2" height="1.2"/><rect x="177.7" y="352.4" width="1.2" height="1.2"/><rect x="380.5" y="305.5" width="1.2" height="1.2"/><rect x="196.6" y="359.5" width="1.2" height="1.2"/><rect x="106.5" y="363.8" width="1.2" height="1.2"/><rect x="131.2" y="353.1" width="1.2" height="1.2"/><rect x="61.0" y="395.8" width="1.2" height="1.2"/><rect x="162.3" y="337.9" width="1.2" height="1.2"/><rect x="54.6" y="374.0" width="1.2" height="1.2"/><rect x="76.2" y="350.7" width="1.2" height="1.2"/><rect x="83.7" y="365.3" width="1.2" height="1.2"/><rect x="330.4" y="352.2" width="1.2" height="1.2"/><rect x="170.4" y="337.9" width="1.2" height="1.2"/><rect x="224.1" y="342.6" width="1.2" height="1.2"/><rect x="110.5" y="345.1" width="1.2" height="1.2"/><rect x="108.5" y="363.3" width="1.2" height="1.2"/><rect x="191.4" y="328.4" width="1.2" height="1.2"/><rect x="286.3" y="321.8" width="1.2" height="1.2"/><rect x="246.6" y="347.5" width="1.2" height="1.2"/><rect x="295.9" y="354.6" width="1.2" height="1.2"/><rect x="52.5" y="390.0" width="1.2" height="1.2"/><rect x="130.3" y="389.7" width="1.2" height="1.2"/><rect x="104.0" y="385.2" width="1.2" height="1.2"/><rect x="356.4" y="301.4" width="1.2" height="1.2"/><rect x="66.2" y="353.2" width="1.2" height="1.2"/><rect x="197.8" y="332.3" width="1.2" height="1.2"/><rect x="228.3" y="365.9" width="1.2" height="1.2"/><rect x="166.5" y="320.5" width="1.2" height="1.2"/><rect x="41.7" y="401.0" width="1.2" height="1.2"/><rect x="180.3" y="332.3" width="1.2" height="1.2"/><rect x="49.9" y="343.6" width="1.2" height="1.2"/><rect x="126.7" y="365.5" width="1.2" height="1.2"/><rect x="134.2" y="362.2" width="1.2" height="1.2"/><rect x="75.6" y="387.5" width="1.2" height="1.2"/><rect x="95.0" y="338.9" width="1.2" height="1.2"/><rect x="70.3" y="387.7" width="1.2" height="1.2"/><rect x="100.3" y="356.0" width="1.2" height="1.2"/><rect x="128.3" y="338.1" width="1.2" height="1.2"/><rect x="144.4" y="375.9" width="1.2" height="1.2"/><rect x="277.2" y="321.4" width="1.2" height="1.2"/><rect x="144.2" y="334.9" width="1.2" height="1.2"/><rect x="49.9" y="392.4" width="1.2" height="1.2"/><rect x="271.4" y="353.4" width="1.2" height="1.2"/><rect x="101.8" y="370.6" width="1.2" height="1.2"/><rect x="116.5" y="392.5" width="1.2" height="1.2"/><rect x="289.3" y="312.9" width="1.2" height="1.2"/><rect x="220.3" y="359.3" width="1.2" height="1.2"/><rect x="116.8" y="375.6" width="1.2" height="1.2"/><rect x="340.2" y="309.6" width="1.2" height="1.2"/><rect x="79.4" y="358.9" width="1.2" height="1.2"/><rect x="205.2" y="360.2" width="1.2" height="1.2"/><rect x="231.3" y="359.1" width="1.2" height="1.2"/><rect x="336.1" y="289.9" width="1.2" height="1.2"/><rect x="112.8" y="382.2" width="1.2" height="1.2"/><rect x="292.3" y="332.5" width="1.2" height="1.2"/><rect x="205.9" y="370.0" width="1.2" height="1.2"/><rect x="47.8" y="363.1" width="1.2" height="1.2"/><rect x="264.6" y="320.9" width="1.2" height="1.2"/><rect x="351.6" y="309.3" width="1.2" height="1.2"/><rect x="51.7" y="388.7" width="1.2" height="1.2"/><rect x="43.7" y="386.1" width="1.2" height="1.2"/><rect x="197.3" y="326.3" width="1.2" height="1.2"/><rect x="158.0" y="389.5" width="1.2" height="1.2"/><rect x="128.5" y="359.0" width="1.2" height="1.2"/><rect x="122.5" y="340.0" width="1.2" height="1.2"/><rect x="346.0" y="330.8" width="1.2" height="1.2"/><rect x="195.8" y="318.8" width="1.2" height="1.2"/><rect x="57.2" y="375.9" width="1.2" height="1.2"/><rect x="184.7" y="330.5" width="1.2" height="1.2"/><rect x="123.6" y="347.1" width="1.2" height="1.2"/><rect x="65.6" y="369.3" width="1.2" height="1.2"/><rect x="166.0" y="332.2" width="1.2" height="1.2"/><rect x="42.6" y="371.5" width="1.2" height="1.2"/><rect x="311.1" y="313.0" width="1.2" height="1.2"/><rect x="350.7" y="294.8" width="1.2" height="1.2"/><rect x="116.3" y="368.8" width="1.2" height="1.2"/><rect x="179.8" y="352.6" width="1.2" height="1.2"/><rect x="100.0" y="385.4" width="1.2" height="1.2"/><rect x="107.2" y="382.0" width="1.2" height="1.2"/><rect x="107.9" y="347.4" width="1.2" height="1.2"/><rect x="63.5" y="398.3" width="1.2" height="1.2"/><rect x="46.0" y="360.1" width="1.2" height="1.2"/><rect x="155.3" y="359.2" width="1.2" height="1.2"/><rect x="68.3" y="395.5" width="1.2" height="1.2"/><rect x="291.5" y="321.9" width="1.2" height="1.2"/><rect x="92.6" y="355.7" width="1.2" height="1.2"/><rect x="71.9" y="390.5" width="1.2" height="1.2"/><rect x="71.6" y="355.4" width="1.2" height="1.2"/><rect x="240.8" y="336.8" width="1.2" height="1.2"/><rect x="290.0" y="311.1" width="1.2" height="1.2"/><rect x="110.1" y="362.2" width="1.2" height="1.2"/><rect x="146.4" y="344.6" width="1.2" height="1.2"/><rect x="70.1" y="363.2" width="1.2" height="1.2"/><rect x="107.7" y="348.6" width="1.2" height="1.2"/><rect x="307.6" y="341.2" width="1.2" height="1.2"/><rect x="116.1" y="362.2" width="1.2" height="1.2"/><rect x="167.9" y="319.9" width="1.2" height="1.2"/><rect x="259.6" y="357.9" width="1.2" height="1.2"/><rect x="83.9" y="369.0" width="1.2" height="1.2"/><rect x="190.6" y="355.9" width="1.2" height="1.2"/><rect x="57.0" y="364.2" width="1.2" height="1.2"/><rect x="97.8" y="355.3" width="1.2" height="1.2"/><rect x="82.0" y="344.8" width="1.2" height="1.2"/><rect x="139.2" y="347.2" width="1.2" height="1.2"/><rect x="76.3" y="387.0" width="1.2" height="1.2"/><rect x="90.7" y="375.9" width="1.2" height="1.2"/><rect x="157.5" y="364.3" width="1.2" height="1.2"/><rect x="131.3" y="351.4" width="1.2" height="1.2"/><rect x="77.4" y="341.8" width="1.2" height="1.2"/><rect x="320.6" y="308.4" width="1.2" height="1.2"/><rect x="85.5" y="380.6" width="1.2" height="1.2"/><rect x="343.4" y="287.0" width="1.2" height="1.2"/><rect x="265.1" y="304.5" width="1.2" height="1.2"/><rect x="113.4" y="380.4" width="1.2" height="1.2"/><rect x="48.3" y="395.0" width="1.2" height="1.2"/><rect x="199.2" y="334.7" width="1.2" height="1.2"/><rect x="293.2" y="307.4" width="1.2" height="1.2"/><rect x="218.7" y="350.9" width="1.2" height="1.2"/><rect x="111.2" y="360.4" width="1.2" height="1.2"/><rect x="51.4" y="382.6" width="1.2" height="1.2"/><rect x="71.2" y="359.4" width="1.2" height="1.2"/><rect x="316.7" y="294.6" width="1.2" height="1.2"/><rect x="361.0" y="318.6" width="1.2" height="1.2"/><rect x="314.4" y="285.8" width="1.2" height="1.2"/><rect x="359.0" y="312.7" width="1.2" height="1.2"/><rect x="233.0" y="338.7" width="1.2" height="1.2"/><rect x="247.6" y="340.5" width="1.2" height="1.2"/><rect x="41.3" y="367.3" width="1.2" height="1.2"/><rect x="127.7" y="363.9" width="1.2" height="1.2"/><rect x="359.4" y="275.8" width="1.2" height="1.2"/><rect x="63.4" y="363.3" width="1.2" height="1.2"/><rect x="124.1" y="376.2" width="1.2" height="1.2"/><rect x="144.2" y="372.6" width="1.2" height="1.2"/><rect x="102.8" y="372.2" width="1.2" height="1.2"/><rect x="107.8" y="388.9" width="1.2" height="1.2"/><rect x="178.9" y="356.9" width="1.2" height="1.2"/><rect x="174.9" y="337.1" width="1.2" height="1.2"/><rect x="161.9" y="337.4" width="1.2" height="1.2"/><rect x="142.5" y="353.1" width="1.2" height="1.2"/><rect x="229.4" y="330.4" width="1.2" height="1.2"/><rect x="316.3" y="321.3" width="1.2" height="1.2"/><rect x="160.3" y="336.0" width="1.2" height="1.2"/><rect x="154.4" y="354.2" width="1.2" height="1.2"/><rect x="225.8" y="346.4" width="1.2" height="1.2"/><rect x="278.0" y="329.1" width="1.2" height="1.2"/><rect x="59.2" y="361.6" width="1.2" height="1.2"/><rect x="358.3" y="288.2" width="1.2" height="1.2"/><rect x="172.8" y="334.9" width="1.2" height="1.2"/><rect x="377.3" y="338.5" width="1.2" height="1.2"/><rect x="78.2" y="393.5" width="1.2" height="1.2"/><rect x="174.6" y="330.6" width="1.2" height="1.2"/><rect x="101.5" y="375.0" width="1.2" height="1.2"/><rect x="50.9" y="356.7" width="1.2" height="1.2"/><rect x="155.9" y="331.6" width="1.2" height="1.2"/><rect x="233.3" y="324.4" width="1.2" height="1.2"/><rect x="217.4" y="319.2" width="1.2" height="1.2"/><rect x="252.2" y="345.4" width="1.2" height="1.2"/><rect x="277.4" y="291.9" width="1.2" height="1.2"/><rect x="94.1" y="371.1" width="1.2" height="1.2"/><rect x="301.2" y="284.8" width="1.2" height="1.2"/><rect x="242.2" y="300.1" width="1.2" height="1.2"/><rect x="78.6" y="370.4" width="1.2" height="1.2"/><rect x="73.1" y="363.2" width="1.2" height="1.2"/><rect x="80.3" y="380.0" width="1.2" height="1.2"/><rect x="295.5" y="318.1" width="1.2" height="1.2"/><rect x="204.7" y="325.9" width="1.2" height="1.2"/><rect x="200.0" y="339.6" width="1.2" height="1.2"/><rect x="86.6" y="386.0" width="1.2" height="1.2"/><rect x="155.7" y="316.5" width="1.2" height="1.2"/><rect x="192.8" y="328.3" width="1.2" height="1.2"/><rect x="297.0" y="318.4" width="1.2" height="1.2"/><rect x="179.5" y="346.6" width="1.2" height="1.2"/><rect x="132.0" y="362.8" width="1.2" height="1.2"/><rect x="379.0" y="290.6" width="1.2" height="1.2"/><rect x="228.7" y="370.7" width="1.2" height="1.2"/><rect x="276.5" y="305.8" width="1.2" height="1.2"/><rect x="164.0" y="361.7" width="1.2" height="1.2"/><rect x="42.7" y="399.6" width="1.2" height="1.2"/><rect x="286.1" y="325.1" width="1.2" height="1.2"/><rect x="42.4" y="350.3" width="1.2" height="1.2"/><rect x="43.8" y="399.8" width="1.2" height="1.2"/><rect x="62.6" y="350.4" width="1.2" height="1.2"/><rect x="132.9" y="357.8" width="1.2" height="1.2"/><rect x="95.0" y="346.4" width="1.2" height="1.2"/><rect x="127.6" y="376.6" width="1.2" height="1.2"/><rect x="233.2" y="327.2" width="1.2" height="1.2"/><rect x="121.2" y="379.0" width="1.2" height="1.2"/><rect x="173.4" y="335.4" width="1.2" height="1.2"/><rect x="248.3" y="355.4" width="1.2" height="1.2"/><rect x="185.9" y="349.4" width="1.2" height="1.2"/><rect x="92.8" y="368.7" width="1.2" height="1.2"/><rect x="55.0" y="354.3" width="1.2" height="1.2"/><rect x="255.6" y="337.9" width="1.2" height="1.2"/><rect x="216.0" y="335.1" width="1.2" height="1.2"/><rect x="70.9" y="404.4" width="1.2" height="1.2"/><rect x="155.2" y="340.2" width="1.2" height="1.2"/><rect x="93.2" y="345.7" width="1.2" height="1.2"/><rect x="208.3" y="340.3" width="1.2" height="1.2"/><rect x="88.2" y="388.9" width="1.2" height="1.2"/><rect x="54.9" y="350.1" width="1.2" height="1.2"/><rect x="57.9" y="359.8" width="1.2" height="1.2"/><rect x="190.8" y="360.2" width="1.2" height="1.2"/><rect x="259.6" y="319.2" width="1.2" height="1.2"/><rect x="40.6" y="388.2" width="1.2" height="1.2"/><rect x="235.1" y="332.2" width="1.2" height="1.2"/><rect x="242.8" y="355.0" width="1.2" height="1.2"/><rect x="103.5" y="382.6" width="1.2" height="1.2"/><rect x="216.0" y="339.9" width="1.2" height="1.2"/><rect x="292.3" y="328.8" width="1.2" height="1.2"/><rect x="293.0" y="338.6" width="1.2" height="1.2"/><rect x="279.3" y="358.2" width="1.2" height="1.2"/><rect x="317.6" y="334.8" width="1.2" height="1.2"/><rect x="167.1" y="353.9" width="1.2" height="1.2"/><rect x="191.3" y="337.3" width="1.2" height="1.2"/><rect x="93.9" y="345.4" width="1.2" height="1.2"/><rect x="187.1" y="331.4" width="1.2" height="1.2"/><rect x="176.8" y="362.6" width="1.2" height="1.2"/><rect x="302.7" y="320.4" width="1.2" height="1.2"/><rect x="46.4" y="376.4" width="1.2" height="1.2"/><rect x="120.0" y="357.4" width="1.2" height="1.2"/><rect x="151.9" y="350.8" width="1.2" height="1.2"/><rect x="183.4" y="334.2" width="1.2" height="1.2"/><rect x="123.6" y="353.8" width="1.2" height="1.2"/><rect x="380.8" y="315.8" width="1.2" height="1.2"/><rect x="229.0" y="322.3" width="1.2" height="1.2"/><rect x="382.9" y="311.2" width="1.2" height="1.2"/><rect x="70.8" y="373.5" width="1.2" height="1.2"/><rect x="216.0" y="356.2" width="1.2" height="1.2"/><rect x="155.4" y="357.6" width="1.2" height="1.2"/><rect x="78.9" y="371.3" width="1.2" height="1.2"/><rect x="164.2" y="368.7" width="1.2" height="1.2"/><rect x="119.8" y="356.2" width="1.2" height="1.2"/><rect x="293.1" y="327.4" width="1.2" height="1.2"/><rect x="202.7" y="365.2" width="1.2" height="1.2"/><rect x="128.8" y="381.5" width="1.2" height="1.2"/><rect x="229.8" y="342.3" width="1.2" height="1.2"/><rect x="146.1" y="345.1" width="1.2" height="1.2"/><rect x="165.2" y="319.5" width="1.2" height="1.2"/><rect x="76.1" y="374.9" width="1.2" height="1.2"/><rect x="331.9" y="302.6" width="1.2" height="1.2"/><rect x="337.7" y="301.4" width="1.2" height="1.2"/><rect x="64.3" y="399.1" width="1.2" height="1.2"/><rect x="314.6" y="297.3" width="1.2" height="1.2"/><rect x="89.0" y="359.7" width="1.2" height="1.2"/><rect x="136.6" y="347.8" width="1.2" height="1.2"/><rect x="166.7" y="339.7" width="1.2" height="1.2"/><rect x="162.8" y="366.8" width="1.2" height="1.2"/><rect x="202.6" y="317.3" width="1.2" height="1.2"/><rect x="71.9" y="360.6" width="1.2" height="1.2"/><rect x="190.6" y="337.3" width="1.2" height="1.2"/><rect x="255.9" y="319.1" width="1.2" height="1.2"/><rect x="104.7" y="353.9" width="1.2" height="1.2"/><rect x="173.5" y="368.1" width="1.2" height="1.2"/><rect x="191.4" y="305.2" width="1.2" height="1.2"/><rect x="52.6" y="371.7" width="1.2" height="1.2"/><rect x="290.8" y="328.1" width="1.2" height="1.2"/><rect x="205.4" y="341.4" width="1.2" height="1.2"/><rect x="74.3" y="352.4" width="1.2" height="1.2"/><rect x="68.4" y="393.6" width="1.2" height="1.2"/><rect x="289.4" y="339.4" width="1.2" height="1.2"/><rect x="52.0" y="377.8" width="1.2" height="1.2"/><rect x="191.8" y="334.6" width="1.2" height="1.2"/><rect x="100.9" y="337.2" width="1.2" height="1.2"/><rect x="238.2" y="330.8" width="1.2" height="1.2"/><rect x="377.8" y="289.0" width="1.2" height="1.2"/><rect x="143.2" y="334.3" width="1.2" height="1.2"/><rect x="46.9" y="385.5" width="1.2" height="1.2"/><rect x="145.1" y="341.0" width="1.2" height="1.2"/><rect x="62.9" y="405.0" width="1.2" height="1.2"/><rect x="212.8" y="358.0" width="1.2" height="1.2"/><rect x="189.9" y="321.3" width="1.2" height="1.2"/><rect x="300.6" y="334.3" width="1.2" height="1.2"/><rect x="341.7" y="326.3" width="1.2" height="1.2"/><rect x="233.4" y="360.3" width="1.2" height="1.2"/><rect x="144.1" y="326.5" width="1.2" height="1.2"/><rect x="287.0" y="329.1" width="1.2" height="1.2"/><rect x="44.8" y="395.6" width="1.2" height="1.2"/><rect x="86.7" y="378.2" width="1.2" height="1.2"/><rect x="329.8" y="283.2" width="1.2" height="1.2"/><rect x="338.0" y="327.1" width="1.2" height="1.2"/><rect x="288.8" y="328.9" width="1.2" height="1.2"/><rect x="142.8" y="344.5" width="1.2" height="1.2"/><rect x="210.8" y="355.6" width="1.2" height="1.2"/><rect x="232.4" y="325.8" width="1.2" height="1.2"/><rect x="252.5" y="342.9" width="1.2" height="1.2"/><rect x="277.1" y="347.6" width="1.2" height="1.2"/><rect x="186.3" y="344.1" width="1.2" height="1.2"/><rect x="217.6" y="305.2" width="1.2" height="1.2"/><rect x="329.6" y="305.5" width="1.2" height="1.2"/><rect x="203.8" y="328.2" width="1.2" height="1.2"/><rect x="98.2" y="367.6" width="1.2" height="1.2"/><rect x="287.4" y="303.3" width="1.2" height="1.2"/><rect x="144.0" y="367.2" width="1.2" height="1.2"/><rect x="169.1" y="333.4" width="1.2" height="1.2"/><rect x="47.7" y="361.1" width="1.2" height="1.2"/><rect x="82.4" y="396.2" width="1.2" height="1.2"/><rect x="320.5" y="324.7" width="1.2" height="1.2"/><rect x="235.4" y="308.6" width="1.2" height="1.2"/><rect x="154.6" y="327.4" width="1.2" height="1.2"/><rect x="193.4" y="324.7" width="1.2" height="1.2"/><rect x="125.2" y="342.4" width="1.2" height="1.2"/><rect x="257.9" y="310.1" width="1.2" height="1.2"/><rect x="195.9" y="326.5" width="1.2" height="1.2"/><rect x="121.6" y="353.4" width="1.2" height="1.2"/><rect x="214.2" y="336.3" width="1.2" height="1.2"/><rect x="58.5" y="363.6" width="1.2" height="1.2"/><rect x="240.1" y="349.7" width="1.2" height="1.2"/><rect x="169.2" y="346.4" width="1.2" height="1.2"/><rect x="79.4" y="337.8" width="1.2" height="1.2"/><rect x="269.4" y="314.0" width="1.2" height="1.2"/><rect x="124.9" y="369.0" width="1.2" height="1.2"/><rect x="49.4" y="362.6" width="1.2" height="1.2"/><rect x="44.1" y="346.0" width="1.2" height="1.2"/><rect x="316.2" y="325.9" width="1.2" height="1.2"/><rect x="151.9" y="332.5" width="1.2" height="1.2"/><rect x="172.7" y="310.4" width="1.2" height="1.2"/><rect x="45.7" y="378.8" width="1.2" height="1.2"/><rect x="61.5" y="397.4" width="1.2" height="1.2"/><rect x="81.4" y="363.3" width="1.2" height="1.2"/><rect x="118.6" y="331.9" width="1.2" height="1.2"/><rect x="147.8" y="344.1" width="1.2" height="1.2"/><rect x="227.1" y="313.4" width="1.2" height="1.2"/><rect x="81.5" y="361.0" width="1.2" height="1.2"/><rect x="94.5" y="377.7" width="1.2" height="1.2"/><rect x="64.7" y="400.5" width="1.2" height="1.2"/><rect x="194.9" y="357.9" width="1.2" height="1.2"/><rect x="83.3" y="384.2" width="1.2" height="1.2"/><rect x="128.0" y="369.2" width="1.2" height="1.2"/><rect x="93.5" y="336.6" width="1.2" height="1.2"/><rect x="169.4" y="350.4" width="1.2" height="1.2"/><rect x="267.7" y="334.7" width="1.2" height="1.2"/><rect x="48.0" y="354.9" width="1.2" height="1.2"/><rect x="113.2" y="365.6" width="1.2" height="1.2"/><rect x="115.9" y="370.6" width="1.2" height="1.2"/><rect x="165.8" y="366.3" width="1.2" height="1.2"/><rect x="182.4" y="359.0" width="1.2" height="1.2"/><rect x="186.6" y="351.3" width="1.2" height="1.2"/><rect x="110.9" y="389.2" width="1.2" height="1.2"/><rect x="347.0" y="289.7" width="1.2" height="1.2"/><rect x="62.2" y="365.9" width="1.2" height="1.2"/><rect x="323.0" y="330.4" width="1.2" height="1.2"/><rect x="207.8" y="332.1" width="1.2" height="1.2"/><rect x="193.5" y="361.1" width="1.2" height="1.2"/><rect x="175.2" y="352.9" width="1.2" height="1.2"/><rect x="74.0" y="392.4" width="1.2" height="1.2"/><rect x="143.6" y="351.8" width="1.2" height="1.2"/><rect x="380.6" y="275.8" width="1.2" height="1.2"/><rect x="148.3" y="345.2" width="1.2" height="1.2"/><rect x="208.6" y="325.9" width="1.2" height="1.2"/><rect x="270.7" y="320.6" width="1.2" height="1.2"/><rect x="107.7" y="371.1" width="1.2" height="1.2"/><rect x="99.1" y="388.1" width="1.2" height="1.2"/></g>
 <polyline points="39.3,170.1 40.0,169.8 40.7,170.5 41.4,169.7 42.1,170.3 42.8,170.1 43.5,170.4 44.2,171.3 44.9,172.3 45.6,171.6 46.3,170.6 47.0,169.7 47.7,170.2 48.4,170.7 49.1,169.7 49.8,169.9 50.5,170.4 51.2,170.9 51.9,170.3 52.6,170.1 53.3,170.9 54.0,169.6 54.7,170.7 55.4,169.9 56.1,169.7 56.8,169.7 57.5,169.9 58.2,170.6 58.9,169.8 59.6,171.0 60.3,173.9 61.0,177.0 61.7,180.5 62.4,177.0 63.1,173.9 63.8,171.0 64.5,170.4 65.2,170.1 65.9,169.9 66.6,170.3 67.3,170.1 68.0,169.9 68.7,170.5 69.4,170.4 70.1,169.8 70.8,170.2 71.5,170.1 72.2,170.6 72.9,170.4 73.6,170.3 74.3,171.1 75.0,172.0 75.7,171.1 76.4,170.4 77.1,169.6 77.8,170.0 78.5,169.4 79.2,170.3 79.9,170.4 80.6,170.1 81.3,170.5 82.0,169.8 82.7,170.3 83.4,170.1 84.1,170.1 84.8,170.4 85.5,173.1 86.2,175.9 86.9,179.0 87.6,176.7 88.3,173.9 89.0,171.1 89.7,170.2 90.4,170.6 91.1,170.4 91.8,169.6 92.5,169.8 93.2,170.2 93.9,169.2 94.6,169.8 95.3,169.4 96.0,169.4 96.7,169.3 97.4,170.3 98.1,169.4 98.8,169.9 99.5,173.2 100.2,177.3 100.9,181.9 101.6,178.5 102.3,174.3 103.0,170.4 103.7,170.3 104.4,170.3 105.1,169.5 105.8,169.7 106.5,169.6 107.2,170.3 107.9,170.4 108.6,169.3 109.3,169.3 110.0,169.4 110.7,170.2 111.4,171.3 112.1,172.3 112.8,171.0 113.5,169.8 114.2,169.6 114.9,169.5 115.6,169.8 116.3,170.3 117.0,169.9 117.7,169.7 118.4,169.8 119.1,169.9 119.8,169.0 120.5,170.2 121.2,173.6 121.9,177.3 122.6,180.3 123.3,176.2 124.0,172.6 124.7,169.6 125.4,169.8 126.1,169.0 126.8,169.0 127.5,169.2 128.2,169.1 128.9,169.3 129.6,168.9 130.3,168.8 131.0,169.0 131.7,169.0 132.4,169.3 133.1,168.8 133.8,170.0 134.5,169.7 135.2,169.0 135.9,169.1 136.6,169.5 137.3,170.6 138.0,172.6 138.7,174.9 139.4,174.5 140.1,172.3 140.8,170.3 141.5,168.8 142.2,168.9 142.9,169.2 143.6,169.1 144.3,169.8 145.0,168.9 145.7,169.4 146.4,174.5 147.1,183.0 147.8,191.9 148.5,201.6 149.2,197.3 149.9,188.0 150.6,179.2 151.3,170.8 152.0,169.6 152.7,169.0 153.4,169.6 154.1,172.6 154.8,175.9 155.5,174.4 156.2,171.3 156.9,169.2 157.6,168.8 158.3,169.7 159.0,169.9 159.7,169.7 160.4,169.6 161.1,169.6 161.8,169.5 162.5,168.8 163.2,169.2 163.9,169.0 164.6,168.5 165.3,168.5 166.0,168.8 166.7,168.8 167.4,169.4 168.1,169.7 168.8,169.7 169.5,171.0 170.2,171.5 170.9,170.2 171.6,169.1 172.3,168.7 173.0,168.7 173.7,168.6 174.4,168.6 175.1,169.2 175.8,169.6 176.5,169.5 177.2,169.0 177.9,169.2 178.6,169.4 179.3,168.4 180.0,169.2 180.7,169.5 181.4,169.3 182.1,169.3 182.8,168.9 183.5,168.5 184.2,169.3 184.9,168.7 185.6,169.3 186.3,169.5 187.0,168.7 187.7,168.7 188.4,169.5 189.1,169.2 189.8,169.4 190.5,171.7 191.2,174.2 191.9,173.8 192.6,171.4 193.3,169.1 194.0,169.2 194.7,169.5 195.4,169.0 196.1,168.6 196.8,168.8 197.5,168.2 198.2,168.1 198.9,169.4 199.6,168.9 200.3,168.7 201.0,169.3 201.7,168.6 202.4,169.2 203.1,169.1 203.8,168.3 204.5,168.3 205.2,168.4 205.9,168.3 206.6,169.4 207.3,172.4 208.0,176.0 208.7,172.4 209.4,169.3 210.1,168.4 210.8,168.6 211.5,173.5 212.2,181.1 212.9,184.7 213.6,176.7 214.3,169.3 215.0,168.6 215.7,168.5 216.4,167.8 217.1,168.4 217.8,168.0 218.5,167.8 219.2,168.9 219.9,168.0 220.6,168.4 221.3,168.7 222.0,168.5 222.7,168.2 223.4,168.4 224.1,168.5 224.8,168.8 225.5,169.8 226.2,171.6 226.9,173.6 227.6,172.2 228.3,170.3 229.0,168.6 229.7,168.4 230.4,168.7 231.1,168.9 231.8,168.2 232.5,168.4 233.2,168.3 233.9,168.3 234.6,168.5 235.3,168.2 236.0,168.3 236.7,168.2 237.4,168.8 238.1,168.5 238.8,168.7 239.5,168.8 240.2,167.8 240.9,168.3 241.6,168.8 242.3,168.6 243.0,167.6 243.7,168.7 244.4,170.1 245.1,171.2 245.8,169.7 246.5,168.2 247.2,168.3 247.9,168.5 248.6,168.6 249.3,167.6 250.0,168.3 250.7,168.3 251.4,167.5 252.1,168.6 252.8,168.7 253.5,167.6 254.2,168.6 254.9,167.8 255.6,167.9 256.3,168.6 257.0,168.4 257.7,167.5 258.4,167.8 259.1,167.9 259.8,167.9 260.5,169.9 261.2,172.9 261.9,174.4 262.6,171.1 263.3,168.2 264.0,167.8 264.7,167.2 265.4,167.6 266.1,168.0 266.8,167.8 267.5,167.2 268.2,168.5 268.9,168.2 269.6,168.4 270.3,167.2 271.0,167.4 271.7,167.1 272.4,168.1 273.1,167.4 273.8,167.2 274.5,167.6 275.2,168.3 275.9,168.1 276.6,167.3 277.3,167.2 278.0,168.2 278.7,167.7 279.4,168.9 280.1,174.2 280.8,178.5 281.5,172.7 282.2,167.6 282.9,167.0 283.6,168.2 284.3,167.7 285.0,168.0 285.7,167.0 286.4,168.0 287.1,166.9 287.8,168.0 288.5,167.4 289.2,167.3 289.9,167.5 290.6,168.1 291.3,167.1 292.0,166.9 292.7,167.5 293.4,167.1 294.1,166.9 294.8,168.2 295.5,170.1 296.2,172.1 296.9,172.4 297.6,170.4 298.3,168.4 299.0,167.3 299.7,167.3 300.4,166.9 301.1,167.1 301.8,166.6 302.5,166.9 303.2,166.6 303.9,167.6 304.6,167.3 305.3,166.8 306.0,167.2 306.7,167.8 307.4,166.7 308.1,167.6 308.8,167.1 309.5,167.2 310.2,167.6 310.9,167.0 311.6,167.2 312.3,167.4 313.0,167.8 313.7,167.6 314.4,168.8 315.1,169.8 315.8,168.4 316.5,167.2 317.2,166.9 317.9,166.4 318.6,166.5 319.3,166.4 320.0,167.4 320.7,166.7 321.4,166.5 322.1,166.4 322.8,167.5 323.5,167.5 324.2,167.2 324.9,166.6 325.6,166.6 326.3,166.6 327.0,166.9 327.7,166.4 328.4,166.8 329.1,166.6 329.8,167.5 330.5,167.8 331.2,169.4 331.9,171.1 332.6,171.9 333.3,170.1 334.0,168.4 334.7,166.8 335.4,166.6 336.1,166.7 336.8,166.8 337.5,166.3 338.2,166.8 338.9,166.0 339.6,166.4 340.3,166.1 341.0,166.6 341.7,166.0 342.4,166.0 343.1,166.4 343.8,166.3 344.5,166.8 345.2,166.7 345.9,167.0 346.6,166.8 347.3,166.9 348.0,167.1 348.7,166.4 349.4,166.3 350.1,168.6 350.8,172.5 351.5,175.6 352.2,171.3 352.9,167.5 353.6,167.0 354.3,167.0 355.0,166.7 355.7,166.8 356.4,166.9 357.1,165.9 357.8,166.5 358.5,166.4 359.2,166.9 359.9,166.8 360.6,166.9 361.3,166.5 362.0,166.9 362.7,166.6 363.4,166.6 364.1,166.0 364.8,165.7 365.5,165.8 366.2,166.1 366.9,165.7 367.6,166.8 368.3,166.4 369.0,166.7 369.7,167.9 370.4,167.7 371.1,166.5 371.8,165.5 372.5,166.6 373.2,166.5 373.9,166.2 374.6,166.2 375.3,166.4 376.0,165.5 376.7,166.5 377.4,165.8 378.1,165.5 378.8,165.8 379.5,166.4 380.2,165.7 380.9,166.4 381.6,166.7 382.3,166.0 383.0,165.9 383.7,166.0 384.4,166.3 385.1,166.4" fill="none" stroke="#2c78b0" stroke-width="1.7" stroke-linejoin="round" opacity="0.55"/><polyline points="39.3,170.1 40.0,169.8 40.7,170.5 41.4,169.7 42.1,170.3 42.8,170.1 43.5,170.4 44.2,171.3 44.9,172.3 45.6,171.6 46.3,170.6 47.0,169.7 47.7,170.2 48.4,170.7 49.1,169.7 49.8,169.9 50.5,170.4 51.2,170.9 51.9,170.3 52.6,170.1 53.3,170.9 54.0,169.6 54.7,170.7 55.4,169.9 56.1,169.7 56.8,169.7 57.5,169.9 58.2,170.6 58.9,169.8 59.6,171.0 60.3,173.9 61.0,177.0 61.7,180.5 62.4,177.0 63.1,173.9 63.8,171.0 64.5,170.4 65.2,170.1 65.9,169.9 66.6,170.3 67.3,170.1 68.0,169.9 68.7,170.5 69.4,170.4 70.1,169.8 70.8,170.2 71.5,170.1 72.2,170.6 72.9,170.4 73.6,170.3 74.3,171.1 75.0,172.0 75.7,171.1 76.4,170.4 77.1,169.6 77.8,170.0 78.5,169.4 79.2,170.3 79.9,170.4 80.6,170.1 81.3,170.5 82.0,169.8 82.7,170.3 83.4,170.1 84.1,170.1 84.8,170.4 85.5,173.1 86.2,175.9 86.9,179.0 87.6,176.7 88.3,173.9 89.0,171.1 89.7,170.2 90.4,170.6 91.1,170.4 91.8,169.6 92.5,169.8 93.2,170.2 93.9,169.2 94.6,169.8 95.3,169.4 96.0,169.4 96.7,169.3 97.4,170.3 98.1,169.4 98.8,169.9 99.5,173.2 100.2,177.3 100.9,181.9 101.6,178.5 102.3,174.3 103.0,170.4 103.7,170.3 104.4,170.3 105.1,169.5 105.8,169.7 106.5,169.6 107.2,170.3 107.9,170.4 108.6,169.3 109.3,169.3 110.0,169.4 110.7,170.2 111.4,171.3 112.1,172.3 112.8,171.0 113.5,169.8 114.2,169.6 114.9,169.5 115.6,169.8 116.3,170.3 117.0,169.9 117.7,169.7 118.4,169.8 119.1,169.9 119.8,169.0 120.5,170.2 121.2,173.6 121.9,177.3 122.6,180.3 123.3,176.2 124.0,172.6 124.7,169.6 125.4,169.8 126.1,169.0 126.8,169.0 127.5,169.2 128.2,169.1 128.9,169.3 129.6,168.9 130.3,168.8 131.0,169.0 131.7,169.0 132.4,169.3 133.1,168.8 133.8,170.0 134.5,169.7 135.2,169.0 135.9,169.1 136.6,169.5 137.3,170.6 138.0,172.6 138.7,174.9 139.4,174.5 140.1,172.3 140.8,170.3 141.5,168.8 142.2,168.9 142.9,169.2 143.6,169.1 144.3,169.8 145.0,168.9 145.7,169.4 146.4,174.5 147.1,183.0 147.8,191.9 148.5,201.6 149.2,197.3 149.9,188.0 150.6,179.2 151.3,170.8 152.0,169.6 152.7,169.0 153.4,169.6 154.1,172.6 154.8,175.9 155.5,174.4 156.2,171.3 156.9,169.2 157.6,168.8 158.3,169.7 159.0,169.9 159.7,169.7 160.4,169.6 161.1,169.6 161.8,169.5 162.5,168.8 163.2,169.2 163.9,169.0 164.6,168.5 165.3,168.5 166.0,168.8 166.7,168.8 167.4,169.4 168.1,169.7 168.8,169.7 169.5,171.0 170.2,171.5 170.9,170.2 171.6,169.1 172.3,168.7 173.0,168.7 173.7,168.6 174.4,168.6 175.1,169.2 175.8,169.6 176.5,169.5 177.2,169.0 177.9,169.2 178.6,169.4 179.3,168.4 180.0,169.2 180.7,169.5 181.4,169.3 182.1,169.3 182.8,168.9 183.5,168.5 184.2,169.3 184.9,168.7 185.6,169.3 186.3,169.5 187.0,168.7 187.7,168.7 188.4,169.5 189.1,169.2 189.8,169.4 190.5,171.7 191.2,174.2 191.9,173.8 192.6,171.4 193.3,169.1 194.0,169.2 194.7,169.5 195.4,169.0 196.1,168.6 196.8,168.8 197.5,168.2 198.2,168.1 198.9,169.4 199.6,168.9 200.3,168.7 201.0,169.3 201.7,168.6 202.4,169.2 203.1,169.1 203.8,168.3 204.5,168.3 205.2,168.4 205.9,168.3 206.6,169.4 207.3,172.4 208.0,176.0 208.7,172.4 209.4,169.3 210.1,168.4 210.8,168.6 211.5,173.5 212.2,181.1 212.9,184.7 213.6,176.7 214.3,169.3 215.0,168.6 215.7,168.5 216.4,167.8 217.1,168.4 217.8,168.0 218.5,167.8 219.2,168.9 219.9,168.0 220.6,168.4 221.3,168.7 222.0,168.5 222.7,168.2 223.4,168.4 224.1,168.5 224.8,168.8 225.5,169.8 226.2,171.6 226.9,173.6 227.6,172.2 228.3,170.3 229.0,168.6 229.7,168.4 230.4,168.7 231.1,168.9 231.8,168.2 232.5,168.4 233.2,168.3 233.9,168.3 234.6,168.5 235.3,168.2 236.0,168.3 236.7,168.2 237.4,168.8 238.1,168.5 238.8,168.7 239.5,168.8 240.2,167.8 240.9,168.3 241.6,168.8 242.3,168.6 243.0,167.6 243.7,168.7 244.4,170.1 245.1,171.2 245.8,169.7 246.5,168.2 247.2,168.3 247.9,168.5 248.6,168.6 249.3,167.6 250.0,168.3 250.7,168.3 251.4,167.5 252.1,168.6 252.8,168.7 253.5,167.6 254.2,168.6 254.9,167.8 255.6,167.9 256.3,168.6 257.0,168.4 257.7,167.5 258.4,167.8 259.1,167.9 259.8,167.9 260.5,169.9 261.2,172.9 261.9,174.4 262.6,171.1 263.3,168.2 264.0,167.8 264.7,167.2 265.4,167.6 266.1,168.0 266.8,167.8 267.5,167.2 268.2,168.5 268.9,168.2 269.6,168.4 270.3,167.2 271.0,167.4 271.7,167.1 272.4,168.1 273.1,167.4 273.8,167.2 274.5,167.6 275.2,168.3 275.9,168.1 276.6,167.3 277.3,167.2 278.0,168.2 278.7,167.7 279.4,168.9 280.1,174.2 280.8,178.5 281.5,172.7 282.2,167.6 282.9,167.0 283.6,168.2 284.3,167.7 285.0,168.0 285.7,167.0 286.4,168.0 287.1,166.9 287.8,168.0 288.5,167.4 289.2,167.3 289.9,167.5 290.6,168.1 291.3,167.1 292.0,166.9 292.7,167.5 293.4,167.1 294.1,166.9 294.8,168.2 295.5,170.1 296.2,172.1 296.9,172.4 297.6,170.4 298.3,168.4 299.0,167.3 299.7,167.3 300.4,166.9 301.1,167.1 301.8,166.6 302.5,166.9 303.2,166.6 303.9,167.6 304.6,167.3 305.3,166.8 306.0,167.2 306.7,167.8 307.4,166.7 308.1,167.6 308.8,167.1 309.5,167.2 310.2,167.6 310.9,167.0 311.6,167.2 312.3,167.4 313.0,167.8 313.7,167.6 314.4,168.8 315.1,169.8 315.8,168.4 316.5,167.2 317.2,166.9 317.9,166.4 318.6,166.5 319.3,166.4 320.0,167.4 320.7,166.7 321.4,166.5 322.1,166.4 322.8,167.5 323.5,167.5 324.2,167.2 324.9,166.6 325.6,166.6 326.3,166.6 327.0,166.9 327.7,166.4 328.4,166.8 329.1,166.6 329.8,167.5 330.5,167.8 331.2,169.4 331.9,171.1 332.6,171.9 333.3,170.1 334.0,168.4 334.7,166.8 335.4,166.6 336.1,166.7 336.8,166.8 337.5,166.3 338.2,166.8 338.9,166.0 339.6,166.4 340.3,166.1 341.0,166.6 341.7,166.0 342.4,166.0 343.1,166.4 343.8,166.3 344.5,166.8 345.2,166.7 345.9,167.0 346.6,166.8 347.3,166.9 348.0,167.1 348.7,166.4 349.4,166.3 350.1,168.6 350.8,172.5 351.5,175.6 352.2,171.3 352.9,167.5 353.6,167.0 354.3,167.0 355.0,166.7 355.7,166.8 356.4,166.9 357.1,165.9 357.8,166.5 358.5,166.4 359.2,166.9 359.9,166.8 360.6,166.9 361.3,166.5 362.0,166.9 362.7,166.6 363.4,166.6 364.1,166.0 364.8,165.7 365.5,165.8 366.2,166.1 366.9,165.7 367.6,166.8 368.3,166.4 369.0,166.7 369.7,167.9 370.4,167.7 371.1,166.5 371.8,165.5 372.5,166.6 373.2,166.5 373.9,166.2 374.6,166.2 375.3,166.4 376.0,165.5 376.7,166.5 377.4,165.8 378.1,165.5 378.8,165.8 379.5,166.4 380.2,165.7 380.9,166.4 381.6,166.7 382.3,166.0 383.0,165.9 383.7,166.0 384.4,166.3 385.1,166.4" fill="none" stroke="#7cc0ee" stroke-width="0.8" stroke-linejoin="round"/>
 <g stroke="#222" stroke-width="0.9"><text x="34.6" y="146.3" text-anchor="end">30</text><line class="tk" x1="35.8" y1="142.50" x2="38.3" y2="142.50"/><text x="34.6" y="195.1" text-anchor="end">25</text><line class="tk" x1="35.8" y1="191.33" x2="38.3" y2="191.33"/><text x="34.6" y="244.0" text-anchor="end">20</text><line class="tk" x1="35.8" y1="240.17" x2="38.3" y2="240.17"/><text x="34.6" y="292.8" text-anchor="end">15</text><line class="tk" x1="35.8" y1="289.00" x2="38.3" y2="289.00"/><text x="34.6" y="341.6" text-anchor="end">10</text><line class="tk" x1="35.8" y1="337.83" x2="38.3" y2="337.83"/><text x="34.6" y="390.5" text-anchor="end">5</text><line class="tk" x1="35.8" y1="386.67" x2="38.3" y2="386.67"/><text x="388.3" y="146.3">60</text><line class="tk" x1="385.3" y1="142.50" x2="387.8" y2="142.50"/><text x="388.3" y="195.1">50</text><line class="tk" x1="385.3" y1="191.33" x2="387.8" y2="191.33"/><text x="388.3" y="244.0">40</text><line class="tk" x1="385.3" y1="240.17" x2="387.8" y2="240.17"/><text x="388.3" y="292.8">30</text><line class="tk" x1="385.3" y1="289.00" x2="387.8" y2="289.00"/><text x="388.3" y="341.6">20</text><line class="tk" x1="385.3" y1="337.83" x2="387.8" y2="337.83"/><text x="388.3" y="390.5">10</text><line class="tk" x1="385.3" y1="386.67" x2="387.8" y2="386.67"/><text x="38.4" y="447.6" text-anchor="middle">0</text><text x="73.0" y="447.6" text-anchor="middle">50</text><text x="107.6" y="447.6" text-anchor="middle">100</text><text x="142.2" y="447.6" text-anchor="middle">150</text><text x="176.8" y="447.6" text-anchor="middle">200</text><text x="211.4" y="447.6" text-anchor="middle">250</text><text x="246.0" y="447.6" text-anchor="middle">300</text><text x="280.6" y="447.6" text-anchor="middle">350</text><text x="315.2" y="447.6" text-anchor="middle">400</text><text x="349.8" y="447.6" text-anchor="middle">450</text><text x="370.5" y="447.6">500gB</text><line class="tk" x1="39.30" y1="435.5" x2="39.30" y2="438.5"/><line class="tk" x1="56.60" y1="435.5" x2="56.60" y2="437.3"/><line class="tk" x1="73.90" y1="435.5" x2="73.90" y2="438.5"/><line class="tk" x1="91.20" y1="435.5" x2="91.20" y2="437.3"/><line class="tk" x1="108.50" y1="435.5" x2="108.50" y2="438.5"/><line class="tk" x1="125.80" y1="435.5" x2="125.80" y2="437.3"/><line class="tk" x1="143.10" y1="435.5" x2="143.10" y2="438.5"/><line class="tk" x1="160.40" y1="435.5" x2="160.40" y2="437.3"/><line class="tk" x1="177.70" y1="435.5" x2="177.70" y2="438.5"/><line class="tk" x1="195.00" y1="435.5" x2="195.00" y2="437.3"/><line class="tk" x1="212.30" y1="435.5" x2="212.30" y2="438.5"/><line class="tk" x1="229.60" y1="435.5" x2="229.60" y2="437.3"/><line class="tk" x1="246.90" y1="435.5" x2="246.90" y2="438.5"/><line class="tk" x1="264.20" y1="435.5" x2="264.20" y2="437.3"/><line class="tk" x1="281.50" y1="435.5" x2="281.50" y2="438.5"/><line class="tk" x1="298.80" y1="435.5" x2="298.80" y2="437.3"/><line class="tk" x1="316.10" y1="435.5" x2="316.10" y2="438.5"/><line class="tk" x1="333.40" y1="435.5" x2="333.40" y2="437.3"/><line class="tk" x1="350.70" y1="435.5" x2="350.70" y2="438.5"/><line class="tk" x1="368.00" y1="435.5" x2="368.00" y2="437.3"/><line class="tk" x1="385.30" y1="435.5" x2="385.30" y2="438.5"/></g>
 <text x="38.8" y="140.8">MB/s</text>
 <text x="372.3" y="140.8">ms</text>
</svg>

<!-- right panel -->
<div class="a" style="left:415px;top:127.4px;width:60.8px;height:17.4px;border:1px solid #3c3c34;border-radius:3px;box-sizing:border-box;background:linear-gradient(#fde2a8,#f8c458 50%,#eea01c)"><div class="a" style="left:1.4px;top:1.4px;right:1.4px;bottom:1.6px;border-radius:1.5px;background:linear-gradient(#fff,#f6f5f0 60%,#e6e3d8)"></div></div>
<div class="a" style="left:415px;top:132px;width:60.8px;text-align:center">Start</div>
<div class="a sep" style="top:152.8px"></div>
<div class="a rb" style="left:411.8px;top:159px"><div class="a" style="left:1.9px;top:1.9px;width:4.6px;height:4.6px;border-radius:50%;background:radial-gradient(#58c850,#289828)"></div></div>
<div class="a" style="left:425.5px;top:159.3px">Read</div>
<div class="a rb" style="left:411.8px;top:172px"></div>
<div class="a" style="left:425.5px;top:172.2px">Write</div>
<div class="a sep" style="top:184.8px"></div>
<div class="a cb" style="left:412px;top:193px"></div>
<div class="a" style="left:425.5px;top:192.6px">Short stroke</div>
<div class="a" style="left:411.8px;top:208.8px;width:51px;height:16.2px;border:1px solid #b8c4cc;background:#fbfbf8;box-sizing:border-box"></div>
<div class="a" style="left:415.5px;top:211.6px;color:#aca899">40</div>
<div class="a" style="left:450px;top:210.3px;width:11.3px;height:13.2px;background:#e6e8e4;border-radius:1px"><svg class="a" style="left:2.6px;top:1.7px" width="6" height="10" viewBox="0 0 6 10"><path d="M0.8 3.6L3 1.2L5.2 3.6M0.8 6.4L3 8.8L5.2 6.4" fill="none" stroke="#b8b8a8" stroke-width="1.1"/></svg></div>
<div class="a" style="left:472px;top:211.6px">gB</div>
<div class="a cb" style="left:412px;top:233px"><svg class="a" style="left:0.2px;top:0.2px" width="8.4" height="8.4" viewBox="0 0 8 8"><path d="M1.3 3.8L3.2 5.8L6.6 1.6" fill="none" stroke="#28a028" stroke-width="1.5"/></svg></div>
<div class="a" style="left:425.5px;top:232.6px">Transfer rate</div>
<div class="a sep" style="top:244.8px"></div>
<div class="a" style="left:412px;top:247.5px">Minimum</div>
<div class="a val" style="top:260.7px;color:#38a0e8">23.7 MB/s</div>
<div class="a" style="left:412px;top:275px">Maximum</div>
<div class="a val" style="top:287.2px;color:#38a0e8">27.7 MB/s</div>
<div class="a" style="left:412px;top:299.8px">Average</div>
<div class="a val" style="top:312.8px;color:#38a0e8">27.2 MB/s</div>
<div class="a sep" style="top:331px"></div>
<div class="a cb" style="left:412px;top:336.3px"><svg class="a" style="left:0.2px;top:0.2px" width="8.4" height="8.4" viewBox="0 0 8 8"><path d="M1.3 3.8L3.2 5.8L6.6 1.6" fill="none" stroke="#28a028" stroke-width="1.5"/></svg></div>
<div class="a" style="left:425.5px;top:336px">Access time</div>
<div class="a val" style="top:349px;color:#f0f040">17.6 ms</div>
<div class="a cb" style="left:412px;top:364.3px"><svg class="a" style="left:0.2px;top:0.2px" width="8.4" height="8.4" viewBox="0 0 8 8"><path d="M1.3 3.8L3.2 5.8L6.6 1.6" fill="none" stroke="#28a028" stroke-width="1.5"/></svg></div>
<div class="a" style="left:425.5px;top:364px">Burst rate</div>
<div class="a val" style="top:377.2px;color:#fff">28.5 MB/s</div>
<div class="a" style="left:412px;top:391.8px">CPU usage</div>
<div class="a val" style="top:404.4px;color:#fff">3.1%</div>

<!-- caption -->
<div class="a" style="right:5px;top:471.8px;color:#fff;font-size:13px;letter-spacing:0;white-space:nowrap;font-family:'Liberation Sans',sans-serif"><span style="letter-spacing:0.55px">[720x565]</span><span style="word-spacing:-2.6px;letter-spacing:-0.25px"> https://upic.me/</span></div>
</body></html>
